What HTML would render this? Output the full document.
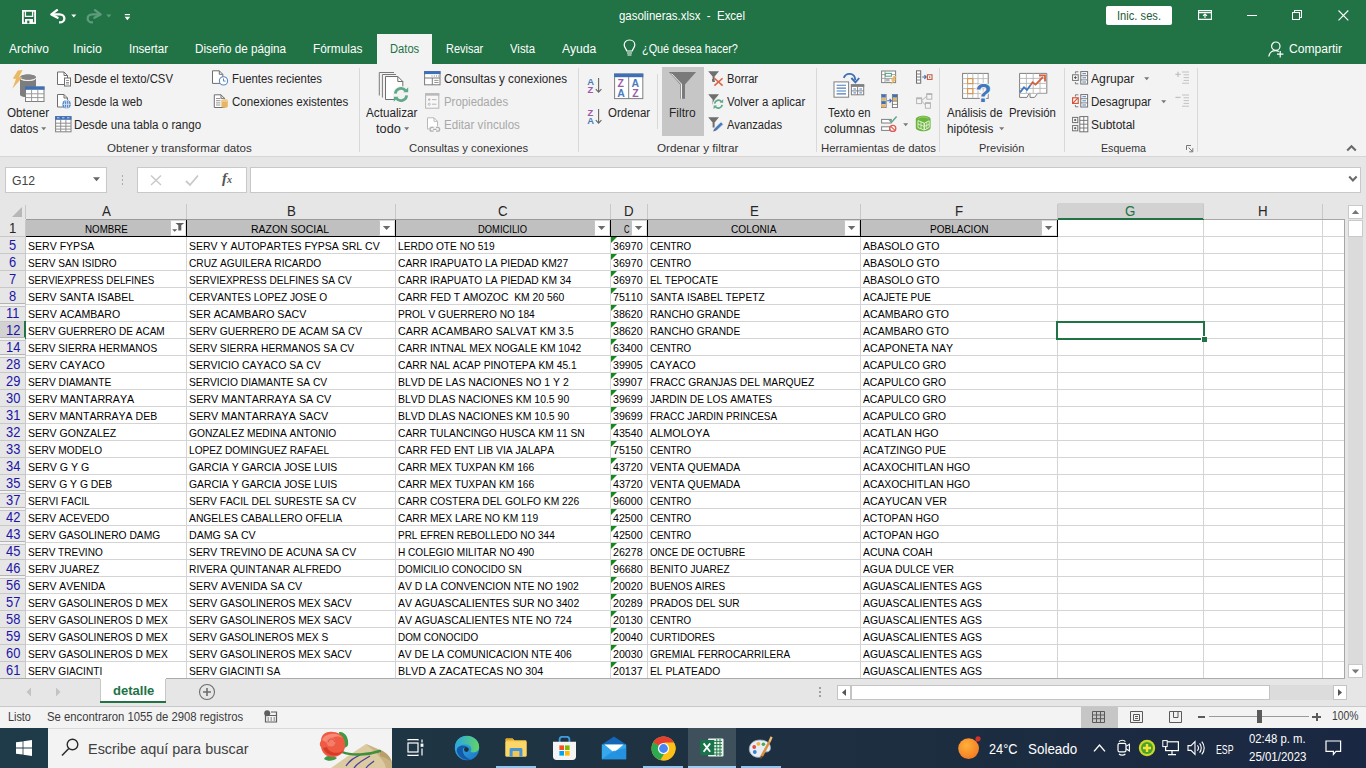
<!DOCTYPE html>
<html><head><meta charset="utf-8"><title>gasolineras.xlsx - Excel</title>
<style>
html,body{margin:0;padding:0;}
body{width:1366px;height:768px;overflow:hidden;position:relative;background:#e6e6e6;font-family:"Liberation Sans",sans-serif;}
.r{position:absolute;display:block;}
.t{position:absolute;white-space:pre;line-height:1;transform-origin:0 0;font-family:"Liberation Sans",sans-serif;}
</style></head><body>
<div class="r" style="left:0px;top:0px;width:1366px;height:64px;background:#217346;"></div>
<div class="r" style="left:377px;top:34px;width:55px;height:30px;background:#f3f3f3;"></div>
<span class="t" style="left:619.00px;top:10.00px;font-size:12px;color:#ffffff;transform:scaleX(0.9542);">gasolineras.xlsx  -  Excel</span>
<span class="t" style="left:9.00px;top:43.00px;font-size:12.5px;color:#ffffff;transform:scaleX(0.9596);">Archivo</span>
<span class="t" style="left:73.00px;top:43.00px;font-size:12.5px;color:#ffffff;transform:scaleX(0.9938);">Inicio</span>
<span class="t" style="left:129.00px;top:43.00px;font-size:12.5px;color:#ffffff;transform:scaleX(0.9203);">Insertar</span>
<span class="t" style="left:195.00px;top:43.00px;font-size:12.5px;color:#ffffff;transform:scaleX(0.9353);">Diseño de página</span>
<span class="t" style="left:313.00px;top:43.00px;font-size:12.5px;color:#ffffff;transform:scaleX(0.9483);">Fórmulas</span>
<span class="t" style="left:445.80px;top:43.00px;font-size:12.5px;color:#ffffff;transform:scaleX(0.8779);">Revisar</span>
<span class="t" style="left:510.00px;top:43.00px;font-size:12.5px;color:#ffffff;transform:scaleX(0.9070);">Vista</span>
<span class="t" style="left:561.80px;top:43.00px;font-size:12.5px;color:#ffffff;transform:scaleX(0.9711);">Ayuda</span>
<span class="t" style="left:641.60px;top:43.00px;font-size:12.5px;color:#ffffff;transform:scaleX(0.8680);">¿Qué desea hacer?</span>
<span class="t" style="left:1289.00px;top:43.00px;font-size:12.5px;color:#ffffff;transform:scaleX(0.9659);">Compartir</span>
<span class="t" style="left:389.80px;top:43.00px;font-size:12.5px;color:#217346;transform:scaleX(0.8942);">Datos</span>
<div class="r" style="left:1106px;top:6px;width:66px;height:19px;background:#ffffff;border-radius:2px;"></div>
<span class="t" style="left:1117.00px;top:10.00px;font-size:12px;color:#1e5c3a;transform:scaleX(0.9293);">Inic. ses.</span>
<div class="r" style="left:0px;top:64px;width:1366px;height:92px;background:#f3f3f3;"></div>
<div class="r" style="left:0px;top:156px;width:1366px;height:1px;background:#d6d6d6;"></div>
<div class="r" style="left:359px;top:68px;width:1px;height:84px;background:#d9d9d9;"></div>
<div class="r" style="left:578px;top:68px;width:1px;height:84px;background:#d9d9d9;"></div>
<div class="r" style="left:816px;top:68px;width:1px;height:84px;background:#d9d9d9;"></div>
<div class="r" style="left:939px;top:68px;width:1px;height:84px;background:#d9d9d9;"></div>
<div class="r" style="left:1064px;top:68px;width:1px;height:84px;background:#d9d9d9;"></div>
<div class="r" style="left:1197px;top:68px;width:1px;height:84px;background:#d9d9d9;"></div>
<div class="r" style="left:657px;top:74px;width:1px;height:55px;background:#d9d9d9;"></div>
<div class="r" style="left:662px;top:67px;width:42px;height:69px;background:#c6c6c6;"></div>
<span class="t" style="left:74.40px;top:73.00px;font-size:12.5px;color:#262626;transform:scaleX(0.9076);">Desde el texto/CSV</span>
<span class="t" style="left:74.40px;top:96.00px;font-size:12.5px;color:#262626;transform:scaleX(0.9031);">Desde la web</span>
<span class="t" style="left:74.40px;top:119.00px;font-size:12.5px;color:#262626;transform:scaleX(0.9283);">Desde una tabla o rango</span>
<span class="t" style="left:6.70px;top:107.00px;font-size:12.5px;color:#262626;transform:scaleX(0.9321);">Obtener</span>
<span class="t" style="left:9.60px;top:123.00px;font-size:12.5px;color:#262626;transform:scaleX(0.9255);">datos</span>
<span class="t" style="left:231.50px;top:73.00px;font-size:12.5px;color:#262626;transform:scaleX(0.9058);">Fuentes recientes</span>
<span class="t" style="left:231.50px;top:96.00px;font-size:12.5px;color:#262626;transform:scaleX(0.9247);">Conexiones existentes</span>
<span class="t" style="left:366.30px;top:107.00px;font-size:12.5px;color:#262626;transform:scaleX(0.9365);">Actualizar</span>
<span class="t" style="left:375.90px;top:123.00px;font-size:12.5px;color:#262626;transform:scaleX(1.0194);">todo</span>
<span class="t" style="left:443.70px;top:73.00px;font-size:12.5px;color:#262626;transform:scaleX(0.9317);">Consultas y conexiones</span>
<span class="t" style="left:607.80px;top:107.00px;font-size:12.5px;color:#262626;transform:scaleX(0.9181);">Ordenar</span>
<span class="t" style="left:669.20px;top:107.00px;font-size:12.5px;color:#262626;transform:scaleX(0.9576);">Filtro</span>
<span class="t" style="left:726.50px;top:73.00px;font-size:12.5px;color:#262626;transform:scaleX(0.8954);">Borrar</span>
<span class="t" style="left:726.50px;top:96.00px;font-size:12.5px;color:#262626;transform:scaleX(0.9150);">Volver a aplicar</span>
<span class="t" style="left:726.50px;top:119.00px;font-size:12.5px;color:#262626;transform:scaleX(0.8925);">Avanzadas</span>
<span class="t" style="left:827.80px;top:107.00px;font-size:12.5px;color:#262626;transform:scaleX(0.9015);">Texto en</span>
<span class="t" style="left:823.60px;top:123.00px;font-size:12.5px;color:#262626;transform:scaleX(0.9589);">columnas</span>
<span class="t" style="left:947.30px;top:107.00px;font-size:12.5px;color:#262626;transform:scaleX(0.9198);">Análisis de</span>
<span class="t" style="left:946.50px;top:123.00px;font-size:12.5px;color:#262626;transform:scaleX(0.9385);">hipótesis</span>
<span class="t" style="left:1009.30px;top:107.00px;font-size:12.5px;color:#262626;transform:scaleX(0.9122);">Previsión</span>
<span class="t" style="left:1090.80px;top:73.00px;font-size:12.5px;color:#262626;transform:scaleX(0.9736);">Agrupar</span>
<span class="t" style="left:1090.80px;top:96.00px;font-size:12.5px;color:#262626;transform:scaleX(0.9217);">Desagrupar</span>
<span class="t" style="left:1090.80px;top:119.00px;font-size:12.5px;color:#262626;transform:scaleX(0.9593);">Subtotal</span>
<span class="t" style="left:443.70px;top:96.00px;font-size:12.5px;color:#a8a8a8;transform:scaleX(0.9132);">Propiedades</span>
<span class="t" style="left:443.70px;top:119.00px;font-size:12.5px;color:#a8a8a8;transform:scaleX(0.9258);">Editar vínculos</span>
<span class="t" style="left:106.60px;top:143.00px;font-size:11.5px;color:#333333;transform:scaleX(1.0062);">Obtener y transformar datos</span>
<span class="t" style="left:409.30px;top:143.00px;font-size:11.5px;color:#333333;transform:scaleX(0.9806);">Consultas y conexiones</span>
<span class="t" style="left:656.60px;top:143.00px;font-size:11.5px;color:#333333;transform:scaleX(1.0177);">Ordenar y filtrar</span>
<span class="t" style="left:820.50px;top:143.00px;font-size:11.5px;color:#333333;transform:scaleX(0.9885);">Herramientas de datos</span>
<span class="t" style="left:979.30px;top:143.00px;font-size:11.5px;color:#333333;transform:scaleX(0.9599);">Previsión</span>
<span class="t" style="left:1100.50px;top:143.00px;font-size:11.5px;color:#333333;transform:scaleX(0.9242);">Esquema</span>
<div class="r" style="left:0px;top:157px;width:1366px;height:46px;background:#e6e6e6;"></div>
<div class="r" style="left:5px;top:167px;width:102px;height:26px;background:#ffffff;box-sizing:border-box;border:1px solid #c8c8c8;"></div>
<span class="t" style="left:12.30px;top:175.00px;font-size:12.5px;color:#444444;transform:scaleX(0.9777);">G12</span>
<svg class="r" style="left:92px;top:176px;" width="9" height="7" viewBox="0 0 9 7"><path d="M1 1.3 H8 L4.5 5.3 Z" fill="#666"/></svg>
<div class="r" style="left:121.5px;top:175px;width:1.5px;height:2px;background:#a9a9a9;"></div>
<div class="r" style="left:121.5px;top:179px;width:1.5px;height:2px;background:#a9a9a9;"></div>
<div class="r" style="left:121.5px;top:183px;width:1.5px;height:2px;background:#a9a9a9;"></div>
<div class="r" style="left:137px;top:167px;width:110px;height:26px;background:#ffffff;box-sizing:border-box;border:1px solid #c8c8c8;"></div>
<svg class="r" style="left:149px;top:173px;" width="14" height="14" viewBox="0 0 14 14"><path d="M2 2.5 L12 12 M12 2.5 L2 12" stroke="#c9c9c9" stroke-width="1.5" fill="none"/></svg>
<svg class="r" style="left:184px;top:173px;" width="16" height="14" viewBox="0 0 16 14"><path d="M2 8 L6 12 L14 2.5" stroke="#c9c9c9" stroke-width="1.8" fill="none"/></svg>
<span class="t" style="left:222px;top:171px;font-size:15px;font-family:'Liberation Serif',serif;font-style:italic;font-weight:bold;color:#555;">f<span style="font-size:10px;">x</span></span>
<div class="r" style="left:250px;top:167px;width:1111px;height:26px;background:#ffffff;box-sizing:border-box;border:1px solid #c8c8c8;"></div>
<svg class="r" style="left:1348px;top:175px;" width="10" height="8" viewBox="0 0 10 8"><path d="M1.2 1.6 L4.9 5.4 L8.6 1.6" stroke="#6a6a6a" stroke-width="2.1" fill="none"/></svg>
<svg class="r" style="left:22px;top:10px;" width="14" height="14" viewBox="0 0 14 14"><path d="M0.9 0.9 H13.1 V13.1 H0.9 Z" fill="none" stroke="#fff" stroke-width="1.8"/><path d="M3.4 1 V6.3 H10.6 V1" fill="none" stroke="#fff" stroke-width="1.3"/><path d="M3 9 H11 V13 H3 Z" fill="#fff"/><path d="M5.2 10.6 H7.4 V13.4 H5.2 Z" fill="#217346"/></svg>
<svg class="r" style="left:50px;top:9px;" width="17" height="15" viewBox="0 0 17 15"><path d="M1.4 5.4 L7 1.2 M1.4 5.4 L7.6 8.8" stroke="#fff" stroke-width="2.3" fill="none" stroke-linecap="round"/><path d="M2.2 5.4 H9.5 C16 5.4 16 13.4 9.5 13.4 H9" stroke="#fff" stroke-width="2.3" fill="none"/></svg>
<svg class="r" style="left:71px;top:14px;" width="6" height="4" viewBox="0 0 6 4"><path d="M0.3 0.5 H5.3 L2.8 3.6 Z" fill="#fff"/></svg>
<svg class="r" style="left:85px;top:9px;" width="17" height="15" viewBox="0 0 17 15"><path d="M15.6 5.4 L10 1.2 M15.6 5.4 L9.4 8.8" stroke="#5e9c7c" stroke-width="2.3" fill="none" stroke-linecap="round"/><path d="M14.8 5.4 H7.5 C1 5.4 1 13.4 7.5 13.4 H8" stroke="#5e9c7c" stroke-width="2.3" fill="none"/></svg>
<svg class="r" style="left:106px;top:14px;" width="6" height="4" viewBox="0 0 6 4"><path d="M0.3 0.5 H5.3 L2.8 3.6 Z" fill="#5e9c7c"/></svg>
<svg class="r" style="left:124px;top:13px;" width="7" height="8" viewBox="0 0 7 8"><path d="M0.8 1 H6 V2.2 H0.8 Z" fill="#fff"/><path d="M0.6 3.8 H6.2 L3.4 7.2 Z" fill="#fff"/></svg>
<svg class="r" style="left:1198px;top:10px;" width="14" height="10" viewBox="0 0 14 10"><path d="M0.6 0.6 H13.4 V9.4 H0.6 Z M0.6 2.6 H13.4" fill="none" stroke="#fff" stroke-width="1.1"/><path d="M7 8 V4.2 M5 5.8 L7 3.9 L9 5.8" fill="none" stroke="#fff" stroke-width="1.1"/></svg>
<div class="r" style="left:1246.5px;top:14.7px;width:10px;height:1.1px;background:#ffffff;"></div>
<svg class="r" style="left:1292px;top:10px;" width="10" height="10" viewBox="0 0 10 10"><path d="M0.5 2.5 H7.5 V9.5 H0.5 Z" fill="none" stroke="#fff" stroke-width="1.05"/><path d="M2.5 2.5 V0.5 H9.5 V7.5 H7.5" fill="none" stroke="#fff" stroke-width="1.05"/></svg>
<svg class="r" style="left:1338px;top:10px;" width="11" height="11" viewBox="0 0 11 11"><path d="M0.5 0.5 L10.3 10.3 M10.3 0.5 L0.5 10.3" stroke="#fff" stroke-width="1.1" fill="none"/></svg>
<svg class="r" style="left:623px;top:39px;" width="13" height="18" viewBox="0 0 13 18"><path d="M6.5 1 C2.8 1 1.2 3.8 1.2 6 C1.2 8.4 3.2 9.6 3.8 12 H9.2 C9.8 9.6 11.8 8.4 11.8 6 C11.8 3.8 10.2 1 6.5 1 Z" fill="none" stroke="#fff" stroke-width="1.2"/><path d="M4 14 H9 M4.5 16 H8.5" stroke="#fff" stroke-width="1.2"/></svg>
<svg class="r" style="left:1268px;top:41px;" width="17" height="17" viewBox="0 0 17 17"><circle cx="7.8" cy="5.2" r="4.2" fill="none" stroke="#fff" stroke-width="1.2"/><path d="M0.8 15.5 C1.6 10.8 4.2 9.6 7.4 9.6 C9 9.6 10 9.9 10.8 10.4" fill="none" stroke="#fff" stroke-width="1.2"/><path d="M12.2 10 V16.4 M9 13.2 H15.4" stroke="#fff" stroke-width="1.2"/></svg>
<svg class="r" style="left:1346px;top:144px;" width="11" height="8" viewBox="0 0 11 8"><path d="M1.2 6.6 L5.5 2.3 L9.8 6.6" fill="none" stroke="#6a6a6a" stroke-width="2.1"/></svg>
<svg class="r" style="left:12px;top:70px;" width="33" height="33" viewBox="0 0 33 33"><path d="M8 7.4 V24.5 C8 28.2 24 28.2 24 24.5 V7.4 Z" fill="#7d7d7d"/><ellipse cx="16" cy="7.4" rx="8" ry="2.9" fill="#8a8a8a" stroke="#f3f3f3" stroke-width="0.9"/><path d="M8 7.4 C8 3.4 24 3.4 24 7.4" fill="#7d7d7d"/><ellipse cx="16" cy="7.2" rx="7.6" ry="2.6" fill="#858585"/><path d="M8 8.2 C9 11.4 23 11.4 24 8.2" fill="none" stroke="#f3f3f3" stroke-width="1"/><path d="M5.8 0.6 L10.6 0 L7.1 6.8 L10.3 7.6 L0.3 18.8 L4 9 L0.8 8.6 Z" fill="#ebb866"/><rect x="13.5" y="17" width="18.5" height="14.5" fill="#fff" stroke="#7f7f7f" stroke-width="1"/><rect x="13" y="16.5" width="19.5" height="3.3" fill="#3f6fb5"/><path d="M19.6 20 V31.5 M25.8 20 V31.5 M13.5 23.8 H32 M13.5 27.6 H32" stroke="#9a9a9a" stroke-width="1"/></svg>
<svg class="r" style="left:41px;top:127px;" width="6" height="4" viewBox="0 0 6 4"><path d="M0.2 0.3 H5.2 L2.7 3.3 Z" fill="#777"/></svg>
<svg class="r" style="left:56px;top:71px;" width="16" height="16" viewBox="0 0 16 16"><path d="M1.5 1 H8.0 L11.5 4.5 V13.5 H1.5 Z" fill="#fff" stroke="#6e6e6e" stroke-width="1"/><path d="M8.0 1 V4.5 H11.5" fill="none" stroke="#6e6e6e" stroke-width="1"/><rect x="8.5" y="7" width="6" height="8" fill="#fff" stroke="#6e6e6e" stroke-width="1"/><path d="M10 9.5 H13 M10 11.5 H13 M10 13 H13" stroke="#8a8a8a" stroke-width="0.9"/></svg>
<svg class="r" style="left:56px;top:94px;" width="16" height="16" viewBox="0 0 16 16"><path d="M1.5 0.5 H8.0 L11.5 4.0 V13 H1.5 Z" fill="#fff" stroke="#6e6e6e" stroke-width="1"/><path d="M8.0 0.5 V4.0 H11.5" fill="none" stroke="#6e6e6e" stroke-width="1"/><circle cx="10.6" cy="10.3" r="4.3" fill="#4f81c5"/><path d="M6.3 10.3 H14.9 M10.6 6 V14.6" stroke="#dbe6f5" stroke-width="0.9"/><ellipse cx="10.6" cy="10.3" rx="2.1" ry="4.3" fill="none" stroke="#dbe6f5" stroke-width="0.9"/></svg>
<svg class="r" style="left:55px;top:116px;" width="17" height="17" viewBox="0 0 17 17"><rect x="0.6" y="0.6" width="15.4" height="15.2" fill="#fff" stroke="#7f7f7f" stroke-width="1"/><rect x="0.2" y="0.2" width="16.2" height="3.6" fill="#3f6fb5"/><path d="M2 1.8 H4.5 M7 1.8 H9.5 M12 1.8 H14.5" stroke="#cfe0f5" stroke-width="0.9"/><path d="M5.7 4 V16 M10.9 4 V16 M0.6 7.2 H16 M0.6 10.2 H16 M0.6 13.1 H16" stroke="#8f8f8f" stroke-width="1"/></svg>
<svg class="r" style="left:211px;top:70px;" width="18" height="16" viewBox="0 0 18 16"><path d="M1.5 0.8 H8.3 L11.8 4.3 V13.4 H1.5 Z" fill="#fff" stroke="#6e6e6e" stroke-width="1"/><path d="M8.3 0.8 V4.3 H11.8" fill="none" stroke="#6e6e6e" stroke-width="1"/><circle cx="12.5" cy="10.9" r="4.1" fill="#fff" stroke="#5b86c2" stroke-width="1.1"/><path d="M12.5 8.5 V11.1 H14.6" fill="none" stroke="#5b86c2" stroke-width="1"/></svg>
<svg class="r" style="left:213px;top:94px;" width="16" height="15" viewBox="0 0 16 15"><path d="M1.3 0.8 H8.0 L11.5 4.3 V13.5 H1.3 Z" fill="#fff" stroke="#6e6e6e" stroke-width="1"/><path d="M8.0 0.8 V4.3 H11.5" fill="none" stroke="#6e6e6e" stroke-width="1"/><path d="M3 4.5 H7.5 M3 6.7 H7.5 M3 8.9 H7.5 M3 11 H7.5" stroke="#8a8a8a" stroke-width="0.9"/><path d="M8.4 6.4 V12.2 C8.4 14.2 14.8 14.2 14.8 12.2 V6.4 Z" fill="#e6b665"/><ellipse cx="11.6" cy="6.4" rx="3.2" ry="1.5" fill="#efc987"/></svg>
<svg class="r" style="left:378px;top:71px;" width="34" height="32" viewBox="0 0 34 32"><path d="M1.3 24.5 V1.5 H16" fill="none" stroke="#7a7a7a" stroke-width="1"/><path d="M4.4 26.6 V3.5 H18" fill="none" stroke="#7a7a7a" stroke-width="1"/><path d="M7.5 5.5 H19.8 L24.8 10.5 V28.5 H7.5 Z" fill="#fff" stroke="#6e6e6e" stroke-width="1"/><path d="M19.8 5.5 V10.5 H24.8" fill="none" stroke="#6e6e6e" stroke-width="1"/><circle cx="23" cy="23.5" r="8.4" fill="#f3f3f3"/><path d="M17.3 22.6 A5.8 5.8 0 0 1 27.6 19.6" fill="none" stroke="#5fa88a" stroke-width="2.7"/><path d="M25.4 21.2 H30.2 V16.2 Z" fill="#5fa88a"/><path d="M28.7 24.4 A5.8 5.8 0 0 1 18.4 27.4" fill="none" stroke="#5fa88a" stroke-width="2.7"/><path d="M20.6 25.8 H15.8 V30.8 Z" fill="#5fa88a"/></svg>
<svg class="r" style="left:403.6px;top:127px;" width="6" height="4" viewBox="0 0 6 4"><path d="M0.2 0.3 H5.2 L2.7 3.3 Z" fill="#777"/></svg>
<svg class="r" style="left:424px;top:71px;" width="17" height="15" viewBox="0 0 17 15"><rect x="0.6" y="0.6" width="15.4" height="13.2" fill="#fff" stroke="#7a7a7a" stroke-width="1"/><rect x="0.1" y="0.1" width="16.4" height="3" fill="#3f6fb5"/><path d="M0.6 7 H16 M8.3 7 V13.8" stroke="#7a7a7a" stroke-width="1"/><path d="M7.5 5 H8.5 M9.8 5 H10.8 M12 5 H13 M14.2 5 H15.2" stroke="#7a7a7a" stroke-width="1"/><path d="M10.3 9.4 H14.5 M10.3 11.5 H14.5" stroke="#8a8a8a" stroke-width="0.9"/></svg>
<svg class="r" style="left:425px;top:93px;" width="15" height="16" viewBox="0 0 15 16"><rect x="0.6" y="0.8" width="13.2" height="14.4" fill="#f7f7f7" stroke="#b5b5b5" stroke-width="1"/><rect x="0.1" y="0.3" width="14.2" height="2.4" fill="#b9b9b9"/><circle cx="4.2" cy="6.6" r="1.2" fill="#b5b5b5"/><circle cx="4.2" cy="11.2" r="1.1" fill="none" stroke="#b5b5b5" stroke-width="0.9"/><path d="M7 6.6 H11.5 M7 11.2 H11.5" stroke="#b5b5b5" stroke-width="1"/></svg>
<svg class="r" style="left:426px;top:117px;" width="16" height="16" viewBox="0 0 16 16"><path d="M1.5 0.8 H8.0 L11.5 4.3 V12 H1.5 Z" fill="#fff" stroke="#b9b9b9" stroke-width="1"/><path d="M8.0 0.8 V4.3 H11.5" fill="none" stroke="#b9b9b9" stroke-width="1"/><rect x="3" y="9.2" width="12" height="6.5" fill="#f3f3f3"/><path d="M7.6 10.4 H5.8 A1.9 1.9 0 0 0 5.8 14.2 H7.6 M10 10.4 H11.8 A1.9 1.9 0 0 1 11.8 14.2 H10 M7 12.3 H10.6" fill="none" stroke="#b0b0b0" stroke-width="1.3"/></svg>
<svg class="r" style="left:587px;top:77px;" width="16" height="17" viewBox="0 0 16 17"><text x="0.2" y="7.6" font-family="Liberation Sans" font-size="9.4" font-weight="bold" fill="#4a7dbd">A</text><text x="0.6" y="15.9" font-family="Liberation Sans" font-size="9.4" font-weight="bold" fill="#9b59a8">Z</text><path d="M11.6 1 V15 M8.8 12.2 L11.6 15.2 L14.4 12.2" fill="none" stroke="#666" stroke-width="1.1"/></svg>
<svg class="r" style="left:587px;top:108px;" width="16" height="17" viewBox="0 0 16 17"><text x="0.6" y="7.6" font-family="Liberation Sans" font-size="9.4" font-weight="bold" fill="#9b59a8">Z</text><text x="0.2" y="15.9" font-family="Liberation Sans" font-size="9.4" font-weight="bold" fill="#4a7dbd">A</text><path d="M11.6 1 V15 M8.8 12.2 L11.6 15.2 L14.4 12.2" fill="none" stroke="#666" stroke-width="1.1"/></svg>
<svg class="r" style="left:614px;top:73px;" width="30" height="27" viewBox="0 0 30 27"><rect x="0.6" y="1" width="28.2" height="24.6" fill="#fff" stroke="#7f7f7f" stroke-width="1"/><rect x="0.1" y="0.6" width="29.2" height="3.6" fill="#3f6fb5"/><path d="M14.7 4 V25.6" stroke="#7f7f7f" stroke-width="1"/><text x="3.6" y="14.4" font-family="Liberation Sans" font-size="10.5" font-weight="bold" fill="#9b59a8">Z</text><text x="3.3" y="24.2" font-family="Liberation Sans" font-size="10.5" font-weight="bold" fill="#4a7dbd">A</text><text x="17.6" y="14.4" font-family="Liberation Sans" font-size="10.5" font-weight="bold" fill="#4a7dbd">A</text><text x="18.2" y="24.2" font-family="Liberation Sans" font-size="10.5" font-weight="bold" fill="#9b59a8">Z</text></svg>
<svg class="r" style="left:668px;top:71px;" width="30" height="29" viewBox="0 0 30 29"><path d="M0.9 1.1 H28.1 L17 13.4 V27.8 H12.2 V13.4 Z" fill="#7a7a7a"/><path d="M3.4 2.6 L13.4 13 V27.8" fill="none" stroke="#fff" stroke-width="1"/></svg>
<svg class="r" style="left:708px;top:71px;" width="16" height="16" viewBox="0 0 16 16"><path d="M0.2 0.2 H11 L6.6 5.4 V10.4 H4.6 V5.4 Z" fill="#6f6f6f"/><path d="M4.6 8 V10.4 H7" fill="none" stroke="#6f6f6f" stroke-width="1"/><path d="M6.4 7.2 L14.6 14.6 M14.6 7.2 L6.4 14.6" stroke="#dc6141" stroke-width="1.5"/></svg>
<svg class="r" style="left:708px;top:94px;" width="17" height="17" viewBox="0 0 17 17"><path d="M0.2 0.2 H11 L6.6 5.4 V10.4 H4.6 V5.4 Z" fill="#6f6f6f"/><circle cx="10.4" cy="10.2" r="5.6" fill="#f3f3f3"/><path d="M6.6 9.6 A3.9 3.9 0 0 1 13.4 7.6" fill="none" stroke="#5fa88a" stroke-width="1.7"/><path d="M11.8 8.8 H15.2 V5.2 Z" fill="#5fa88a"/><path d="M14.2 10.8 A3.9 3.9 0 0 1 7.4 12.8" fill="none" stroke="#5fa88a" stroke-width="1.7"/><path d="M9 11.6 H5.6 V15.2 Z" fill="#5fa88a"/></svg>
<svg class="r" style="left:708px;top:117px;" width="17" height="16" viewBox="0 0 17 16"><path d="M0.2 0.2 H11 L6.6 5.4 V10.4 H4.6 V5.4 Z" fill="#6f6f6f"/><path d="M5.2 14.6 L6.4 11.2 L13 4.8 L15.4 7.2 L8.8 13.6 Z" fill="#4a7dbd" stroke="#f3f3f3" stroke-width="0.8"/><path d="M5.2 14.6 L6.2 11.8 L8.2 13.6 Z" fill="#6f6f6f"/></svg>
<svg class="r" style="left:833px;top:72px;" width="32" height="26" viewBox="0 0 32 26"><rect x="1" y="9.9" width="14.6" height="15.3" fill="#fff" stroke="#7f7f7f" stroke-width="1"/><path d="M3.6 13.2 H13 M3.6 16.1 H13 M3.6 19 H13 M3.6 21.9 H13" stroke="#4a7dbd" stroke-width="1.1"/><rect x="18.4" y="12.8" width="12.3" height="10" fill="#fff" stroke="#7f7f7f" stroke-width="1"/><rect x="17.9" y="12.3" width="13.3" height="2.6" fill="#7f7f7f"/><path d="M24.6 15 V22.8 M18.4 18.9 H30.7" stroke="#7f7f7f" stroke-width="1"/><path d="M20.4 17 H23 M26.4 17 H29 M20.4 20.9 H23 M26.4 20.9 H29" stroke="#4a7dbd" stroke-width="1"/><path d="M10.8 5.8 C13 0.2 22 0.2 22.3 8.2" fill="none" stroke="#3f6fb5" stroke-width="1.9"/><path d="M18.4 6 L22.4 10.4 L26.2 6" fill="none" stroke="#3f6fb5" stroke-width="1.9"/></svg>
<svg class="r" style="left:881px;top:70px;" width="17" height="16" viewBox="0 0 17 16"><rect x="0.6" y="1" width="14" height="11.6" fill="#fff" stroke="#7f7f7f" stroke-width="1"/><path d="M0.6 4.6 H14.6 M0.6 8.4 H14.6 M4 1 V12.6" stroke="#9a9a9a" stroke-width="0.9"/><rect x="4.4" y="3.4" width="6" height="2.8" fill="#fff" stroke="#5fa88a" stroke-width="1.1"/><rect x="4.6" y="8.8" width="4" height="2.6" fill="#b5b5b5"/><path d="M12.6 6 L15.6 6 L13.4 9.4 L15.2 9.6 L9.6 15 L11.4 10.6 L9.8 10.4 Z" fill="#ebb866"/></svg>
<svg class="r" style="left:881px;top:94px;" width="17" height="14" viewBox="0 0 17 14"><rect x="0.1" y="0.2" width="5" height="13.4" fill="#fff" stroke="#6f6f6f" stroke-width="0.9"/><rect x="0.5" y="0.5" width="4.2" height="3.1" fill="#3f6fb5"/><rect x="0.5" y="3.9" width="4.2" height="3" fill="#e6b665"/><rect x="0.5" y="7.1" width="4.2" height="3" fill="#3f6fb5"/><rect x="0.5" y="10.3" width="4.2" height="3" fill="#e6b665"/><rect x="11.4" y="0.2" width="5" height="13.4" fill="#fff" stroke="#6f6f6f" stroke-width="0.9"/><rect x="11.8" y="0.5" width="4.2" height="3.1" fill="#3f6fb5"/><rect x="11.8" y="3.9" width="4.2" height="3" fill="#e6b665"/><path d="M6.2 6.8 H10.2 M8.6 5 L10.4 6.8 L8.6 8.6" fill="none" stroke="#3f6fb5" stroke-width="1.1"/><path d="M11.4 7.2 H16.4 M11.4 10.4 H16.4" stroke="#6f6f6f" stroke-width="0.8"/></svg>
<svg class="r" style="left:881px;top:116px;" width="17" height="17" viewBox="0 0 17 17"><rect x="0.6" y="3.4" width="9.6" height="3.6" fill="#fff" stroke="#7f7f7f" stroke-width="1"/><rect x="0.6" y="10.8" width="8" height="3.6" fill="#fff" stroke="#7f7f7f" stroke-width="1"/><path d="M8.2 3.8 L10.6 6.2 L15.6 0.6" fill="none" stroke="#5fa88a" stroke-width="1.5"/><circle cx="11.8" cy="12.4" r="3" fill="#fff" stroke="#dc5a4e" stroke-width="1.3"/><path d="M9.8 10.4 L13.8 14.4" stroke="#dc5a4e" stroke-width="1.2"/></svg>
<svg class="r" style="left:903px;top:123px;" width="6" height="4" viewBox="0 0 6 4"><path d="M0.2 0.2 H5.2 L2.7 3.2 Z" fill="#777"/></svg>
<svg class="r" style="left:916px;top:70px;" width="17" height="14" viewBox="0 0 17 14"><rect x="0.5" y="0.8" width="4.2" height="12.4" fill="#fff" stroke="#6f6f6f" stroke-width="1"/><path d="M0.5 4 H4.7 M0.5 7 H4.7 M0.5 10 H4.7" stroke="#6f6f6f" stroke-width="0.9"/><path d="M6.2 7 H10 M8.4 5.2 L10.2 7 L8.4 8.8" fill="none" stroke="#3f6fb5" stroke-width="1.1"/><rect x="11.4" y="4.8" width="4.6" height="4.6" fill="#fff" stroke="#c65a3c" stroke-width="1.1"/><rect x="13" y="6.4" width="1.4" height="1.4" fill="#c65a3c"/></svg>
<svg class="r" style="left:916px;top:93px;" width="17" height="16" viewBox="0 0 17 16"><path d="M5.6 7.6 L11 3 M5.6 8 L9.4 12" stroke="#b5b5b5" stroke-width="1"/><rect x="0.6" y="5" width="5" height="5.6" fill="#f5f5f5" stroke="#b5b5b5" stroke-width="1"/><rect x="0.2" y="4.6" width="5.8" height="1.6" fill="#b5b5b5"/><rect x="10.8" y="0.8" width="5" height="5.4" fill="#f5f5f5" stroke="#b5b5b5" stroke-width="1"/><rect x="10.4" y="0.4" width="5.8" height="1.6" fill="#b5b5b5"/><rect x="9.4" y="9.8" width="5" height="5.4" fill="#f5f5f5" stroke="#b5b5b5" stroke-width="1"/><rect x="9" y="9.4" width="5.8" height="1.6" fill="#b5b5b5"/></svg>
<svg class="r" style="left:915px;top:115px;" width="17" height="17" viewBox="0 0 17 17"><path d="M0.8 4.4 C0.8 -0.6 15.6 -0.6 15.6 4.4 V12.6 C15.6 17.6 0.8 17.6 0.8 12.6 Z" fill="#6bb53f"/><path d="M3 5.6 L9 8 V15 L3 12.6 Z M9.6 8 L14.2 5.8 V12.4 L9.6 15 Z" fill="none" stroke="#e8f5dc" stroke-width="0.9"/><path d="M3 9 L9 11.4 M6 6.8 V13.8 M11.8 7 V13.8 M9.6 11.4 L14.2 9.2" stroke="#e8f5dc" stroke-width="0.8"/><path d="M3.4 3.6 C5 1.4 11.6 1.4 13.4 3.8" fill="none" stroke="#9fd47a" stroke-width="1"/></svg>
<svg class="r" style="left:962px;top:72px;" width="30" height="31" viewBox="0 0 30 31"><rect x="0.6" y="1.4" width="25.6" height="25" fill="#fff" stroke="#7f7f7f" stroke-width="1"/><path d="M5.6 1.4 V26.4 M10.8 1.4 V26.4 M16 1.4 V26.4 M21.2 1.4 V26.4 M0.6 6.6 H26.2 M0.6 11.6 H26.2 M0.6 16.6 H26.2 M0.6 21.6 H26.2" stroke="#b9b9b9" stroke-width="0.9"/><rect x="5.6" y="6.6" width="5.2" height="5" fill="#fff" stroke="#e0954a" stroke-width="1.2"/><rect x="5.6" y="16.6" width="5.2" height="5" fill="#fff" stroke="#e0954a" stroke-width="1.2"/><path d="M14 10 H30 V30 H18 V22 H14 Z" fill="#f3f3f3" opacity="0.0"/><text x="13.6" y="29.6" font-family="Liberation Sans" font-size="26" font-weight="bold" fill="#f3f3f3" stroke="#f3f3f3" stroke-width="2.4">?</text><text x="13.6" y="29.6" font-family="Liberation Sans" font-size="26" font-weight="bold" fill="#3f78bd">?</text></svg>
<svg class="r" style="left:999px;top:127px;" width="6" height="4" viewBox="0 0 6 4"><path d="M0.2 0.3 H5.2 L2.7 3.3 Z" fill="#777"/></svg>
<svg class="r" style="left:1019px;top:72px;" width="29" height="27" viewBox="0 0 29 27"><path d="M0.6 1.4 H27.8 V21.4 H18.6 L15.6 25.4 H11 V21.4 H10 L8 25.4 H0.6 Z" fill="#fff" stroke="#7f7f7f" stroke-width="1"/><path d="M7.4 1.4 V21.4 M14.2 1.4 V21.4 M21 1.4 V21.4 M0.6 6.4 H27.8 M0.6 11.4 H27.8 M0.6 16.4 H27.8 M0.6 21.4 H27.8" stroke="#b5b5b5" stroke-width="0.9"/><path d="M1 20.4 L5 15.4 L8 18 L11.6 13" fill="none" stroke="#3f78bd" stroke-width="1.8"/><path d="M11.6 13 L13.6 10.2 L16.6 12.6 L24 5" fill="none" stroke="#d4613e" stroke-width="1.8"/><path d="M20 3.4 H26 V9.4" fill="none" stroke="#d4613e" stroke-width="1.8"/></svg>
<svg class="r" style="left:1072px;top:71px;" width="17" height="14" viewBox="0 0 17 14"><rect x="8.8" y="0.6" width="6.8" height="12.4" fill="#fff" stroke="#6f6f6f" stroke-width="1"/><path d="M8.8 4.7 H15.6 M8.8 8.9 H15.6" stroke="#6f6f6f" stroke-width="0.9"/><path d="M10.4 2.7 H14 M10.4 6.8 H14 M10.4 11 H14" stroke="#4a7dbd" stroke-width="1"/><path d="M6.4 0.8 H3.4 V2.6 M6.4 12.8 H3.4 V11" fill="none" stroke="#6f6f6f" stroke-width="0.9"/><rect x="0.6" y="3.8" width="5.6" height="5.6" fill="#fff" stroke="#6f6f6f" stroke-width="1"/><path d="M2 6.6 H4.8 M3.4 5.2 V8" stroke="#444" stroke-width="0.9"/></svg>
<svg class="r" style="left:1072px;top:94px;" width="17" height="14" viewBox="0 0 17 14"><rect x="8.8" y="0.6" width="6.8" height="12.4" fill="#fff" stroke="#6f6f6f" stroke-width="1"/><path d="M8.8 4.7 H15.6 M8.8 8.9 H15.6" stroke="#6f6f6f" stroke-width="0.9"/><path d="M10.4 2.7 H14 M10.4 6.8 H14 M10.4 11 H14" stroke="#4a7dbd" stroke-width="1"/><path d="M6.4 0.8 H3.4 V2.6 M6.4 12.8 H3.4 V11" fill="none" stroke="#6f6f6f" stroke-width="0.9"/><rect x="0.6" y="3.8" width="5.6" height="5.6" fill="#fff" stroke="#d4553a" stroke-width="1.2"/><path d="M1 9 L5.8 4.2" stroke="#d4553a" stroke-width="1.1"/></svg>
<svg class="r" style="left:1072px;top:116px;" width="17" height="17" viewBox="0 0 17 17"><rect x="0.6" y="1.4" width="5.2" height="5.2" fill="#fff" stroke="#6f6f6f" stroke-width="1"/><path d="M2 4 H4.4 M3.2 2.8 V5.2" stroke="#444" stroke-width="0.9"/><rect x="0.6" y="9.6" width="5.2" height="5.2" fill="#fff" stroke="#6f6f6f" stroke-width="1"/><path d="M2 12.2 H4.4 M3.2 11 V13.4" stroke="#444" stroke-width="0.9"/><rect x="7.8" y="0.6" width="8" height="15.2" fill="#fff" stroke="#6f6f6f" stroke-width="1"/><path d="M11.8 0.6 V15.8 M7.8 4.4 H15.8 M7.8 8.2 H15.8 M7.8 12 H15.8" stroke="#6f6f6f" stroke-width="0.9"/></svg>
<svg class="r" style="left:1144px;top:77px;" width="6" height="4" viewBox="0 0 6 4"><path d="M0.2 0.2 H5.2 L2.7 3.2 Z" fill="#777"/></svg>
<svg class="r" style="left:1161px;top:100px;" width="6" height="4" viewBox="0 0 6 4"><path d="M0.2 0.2 H5.2 L2.7 3.2 Z" fill="#777"/></svg>
<svg class="r" style="left:1175px;top:71px;" width="15" height="13" viewBox="0 0 15 13"><path d="M7 1 H14 M8.6 3.8 H14 M8.6 6.6 H14 M8.6 9.4 H14 M7 12.2 H14" stroke="#c2c2c2" stroke-width="1"/><path d="M0.4 3.4 H5.6 M3 0.8 V6" stroke="#c2c2c2" stroke-width="1.3"/></svg>
<svg class="r" style="left:1175px;top:94px;" width="15" height="13" viewBox="0 0 15 13"><path d="M7 1 H14 M8.6 3.8 H14 M8.6 6.6 H14 M8.6 9.4 H14 M7 12.2 H14" stroke="#c2c2c2" stroke-width="1"/><path d="M0.4 3.4 H5.6" stroke="#c2c2c2" stroke-width="1.3"/></svg>
<svg class="r" style="left:1186px;top:145px;" width="8" height="8" viewBox="0 0 8 8"><path d="M0.5 5 V0.5 H5" fill="none" stroke="#777" stroke-width="1"/><path d="M2.6 2.6 L6.6 6.6 M6.8 3.2 V6.8 H3.2" fill="none" stroke="#777" stroke-width="1"/></svg>
<div class="r" style="left:26px;top:220px;width:1319px;height:458px;background:#ffffff;"></div>
<div class="r" style="left:0px;top:203px;width:1345px;height:17px;background:#e6e6e6;"></div>
<div class="r" style="left:1058px;top:203px;width:146px;height:16px;background:#d2d2d2;"></div>
<div class="r" style="left:1057px;top:218px;width:147px;height:2px;background:#217346;"></div>
<div class="r" style="left:186px;top:204px;width:1px;height:15px;background:#c8c8c8;"></div>
<div class="r" style="left:395px;top:204px;width:1px;height:15px;background:#c8c8c8;"></div>
<div class="r" style="left:610px;top:204px;width:1px;height:15px;background:#c8c8c8;"></div>
<div class="r" style="left:647px;top:204px;width:1px;height:15px;background:#c8c8c8;"></div>
<div class="r" style="left:860px;top:204px;width:1px;height:15px;background:#c8c8c8;"></div>
<div class="r" style="left:1057px;top:204px;width:1px;height:15px;background:#c8c8c8;"></div>
<div class="r" style="left:1203px;top:204px;width:1px;height:15px;background:#c8c8c8;"></div>
<div class="r" style="left:1322px;top:204px;width:1px;height:15px;background:#c8c8c8;"></div>
<div class="r" style="left:25px;top:205px;width:1px;height:14px;background:#c8c8c8;"></div>
<svg class="r" style="left:11px;top:206px;" width="12" height="12" viewBox="0 0 12 12"><path d="M11 1 L11 11 L1 11 Z" fill="#b7b7b7"/></svg>
<span class="t" style="left:101.56px;top:204.00px;font-size:14px;color:#262626;transform:scaleX(0.95);">A</span>
<span class="t" style="left:286.56px;top:204.00px;font-size:14px;color:#262626;transform:scaleX(0.95);">B</span>
<span class="t" style="left:498.20px;top:204.00px;font-size:14px;color:#262626;transform:scaleX(0.95);">C</span>
<span class="t" style="left:624.20px;top:204.00px;font-size:14px;color:#262626;transform:scaleX(0.95);">D</span>
<span class="t" style="left:749.56px;top:204.00px;font-size:14px;color:#262626;transform:scaleX(0.95);">E</span>
<span class="t" style="left:954.94px;top:204.00px;font-size:14px;color:#262626;transform:scaleX(0.95);">F</span>
<span class="t" style="left:1125.33px;top:204.00px;font-size:14px;color:#217346;transform:scaleX(0.95);">G</span>
<span class="t" style="left:1258.20px;top:204.00px;font-size:14px;color:#262626;transform:scaleX(0.95);">H</span>
<div class="r" style="left:0px;top:220px;width:26px;height:458px;background:#e6e6e6;"></div>
<div class="r" style="left:25px;top:220px;width:1px;height:458px;background:#c8c8c8;"></div>
<div class="r" style="left:186px;top:220px;width:1px;height:458px;background:#d4d4d4;"></div>
<div class="r" style="left:395px;top:220px;width:1px;height:458px;background:#d4d4d4;"></div>
<div class="r" style="left:610px;top:220px;width:1px;height:458px;background:#d4d4d4;"></div>
<div class="r" style="left:647px;top:220px;width:1px;height:458px;background:#d4d4d4;"></div>
<div class="r" style="left:860px;top:220px;width:1px;height:458px;background:#d4d4d4;"></div>
<div class="r" style="left:1057px;top:220px;width:1px;height:458px;background:#d4d4d4;"></div>
<div class="r" style="left:1203px;top:220px;width:1px;height:458px;background:#d4d4d4;"></div>
<div class="r" style="left:1322px;top:220px;width:1px;height:458px;background:#d4d4d4;"></div>
<div class="r" style="left:1344px;top:220px;width:1px;height:458px;background:#d4d4d4;"></div>
<div class="r" style="left:26px;top:236px;width:1319px;height:1px;background:#d4d4d4;"></div>
<div class="r" style="left:0px;top:236px;width:25px;height:1px;background:#c8c8c8;"></div>
<div class="r" style="left:26px;top:253px;width:1319px;height:1px;background:#d4d4d4;"></div>
<div class="r" style="left:0px;top:253px;width:25px;height:1px;background:#c8c8c8;"></div>
<div class="r" style="left:26px;top:270px;width:1319px;height:1px;background:#d4d4d4;"></div>
<div class="r" style="left:0px;top:270px;width:25px;height:1px;background:#c8c8c8;"></div>
<div class="r" style="left:26px;top:287px;width:1319px;height:1px;background:#d4d4d4;"></div>
<div class="r" style="left:0px;top:287px;width:25px;height:1px;background:#c8c8c8;"></div>
<div class="r" style="left:26px;top:304px;width:1319px;height:1px;background:#d4d4d4;"></div>
<div class="r" style="left:0px;top:304px;width:25px;height:1px;background:#c8c8c8;"></div>
<div class="r" style="left:26px;top:321px;width:1319px;height:1px;background:#d4d4d4;"></div>
<div class="r" style="left:0px;top:321px;width:25px;height:1px;background:#c8c8c8;"></div>
<div class="r" style="left:26px;top:338px;width:1319px;height:1px;background:#d4d4d4;"></div>
<div class="r" style="left:0px;top:338px;width:25px;height:1px;background:#c8c8c8;"></div>
<div class="r" style="left:26px;top:355px;width:1319px;height:1px;background:#d4d4d4;"></div>
<div class="r" style="left:0px;top:355px;width:25px;height:1px;background:#c8c8c8;"></div>
<div class="r" style="left:26px;top:372px;width:1319px;height:1px;background:#d4d4d4;"></div>
<div class="r" style="left:0px;top:372px;width:25px;height:1px;background:#c8c8c8;"></div>
<div class="r" style="left:26px;top:389px;width:1319px;height:1px;background:#d4d4d4;"></div>
<div class="r" style="left:0px;top:389px;width:25px;height:1px;background:#c8c8c8;"></div>
<div class="r" style="left:26px;top:406px;width:1319px;height:1px;background:#d4d4d4;"></div>
<div class="r" style="left:0px;top:406px;width:25px;height:1px;background:#c8c8c8;"></div>
<div class="r" style="left:26px;top:423px;width:1319px;height:1px;background:#d4d4d4;"></div>
<div class="r" style="left:0px;top:423px;width:25px;height:1px;background:#c8c8c8;"></div>
<div class="r" style="left:26px;top:440px;width:1319px;height:1px;background:#d4d4d4;"></div>
<div class="r" style="left:0px;top:440px;width:25px;height:1px;background:#c8c8c8;"></div>
<div class="r" style="left:26px;top:457px;width:1319px;height:1px;background:#d4d4d4;"></div>
<div class="r" style="left:0px;top:457px;width:25px;height:1px;background:#c8c8c8;"></div>
<div class="r" style="left:26px;top:474px;width:1319px;height:1px;background:#d4d4d4;"></div>
<div class="r" style="left:0px;top:474px;width:25px;height:1px;background:#c8c8c8;"></div>
<div class="r" style="left:26px;top:491px;width:1319px;height:1px;background:#d4d4d4;"></div>
<div class="r" style="left:0px;top:491px;width:25px;height:1px;background:#c8c8c8;"></div>
<div class="r" style="left:26px;top:508px;width:1319px;height:1px;background:#d4d4d4;"></div>
<div class="r" style="left:0px;top:508px;width:25px;height:1px;background:#c8c8c8;"></div>
<div class="r" style="left:26px;top:525px;width:1319px;height:1px;background:#d4d4d4;"></div>
<div class="r" style="left:0px;top:525px;width:25px;height:1px;background:#c8c8c8;"></div>
<div class="r" style="left:26px;top:542px;width:1319px;height:1px;background:#d4d4d4;"></div>
<div class="r" style="left:0px;top:542px;width:25px;height:1px;background:#c8c8c8;"></div>
<div class="r" style="left:26px;top:559px;width:1319px;height:1px;background:#d4d4d4;"></div>
<div class="r" style="left:0px;top:559px;width:25px;height:1px;background:#c8c8c8;"></div>
<div class="r" style="left:26px;top:576px;width:1319px;height:1px;background:#d4d4d4;"></div>
<div class="r" style="left:0px;top:576px;width:25px;height:1px;background:#c8c8c8;"></div>
<div class="r" style="left:26px;top:593px;width:1319px;height:1px;background:#d4d4d4;"></div>
<div class="r" style="left:0px;top:593px;width:25px;height:1px;background:#c8c8c8;"></div>
<div class="r" style="left:26px;top:610px;width:1319px;height:1px;background:#d4d4d4;"></div>
<div class="r" style="left:0px;top:610px;width:25px;height:1px;background:#c8c8c8;"></div>
<div class="r" style="left:26px;top:627px;width:1319px;height:1px;background:#d4d4d4;"></div>
<div class="r" style="left:0px;top:627px;width:25px;height:1px;background:#c8c8c8;"></div>
<div class="r" style="left:26px;top:644px;width:1319px;height:1px;background:#d4d4d4;"></div>
<div class="r" style="left:0px;top:644px;width:25px;height:1px;background:#c8c8c8;"></div>
<div class="r" style="left:26px;top:661px;width:1319px;height:1px;background:#d4d4d4;"></div>
<div class="r" style="left:0px;top:661px;width:25px;height:1px;background:#c8c8c8;"></div>
<div class="r" style="left:26px;top:678px;width:1319px;height:1px;background:#d4d4d4;"></div>
<div class="r" style="left:0px;top:678px;width:25px;height:1px;background:#c8c8c8;"></div>
<div class="r" style="left:26px;top:220px;width:160px;height:16px;background:#c0c0c0;"></div>
<div class="r" style="left:186px;top:220px;width:1px;height:17px;background:#000000;"></div>
<div class="r" style="left:187px;top:220px;width:208px;height:16px;background:#c0c0c0;"></div>
<div class="r" style="left:395px;top:220px;width:1px;height:17px;background:#000000;"></div>
<div class="r" style="left:396px;top:220px;width:214px;height:16px;background:#c0c0c0;"></div>
<div class="r" style="left:610px;top:220px;width:1px;height:17px;background:#000000;"></div>
<div class="r" style="left:611px;top:220px;width:36px;height:16px;background:#c0c0c0;"></div>
<div class="r" style="left:647px;top:220px;width:1px;height:17px;background:#000000;"></div>
<div class="r" style="left:648px;top:220px;width:212px;height:16px;background:#c0c0c0;"></div>
<div class="r" style="left:860px;top:220px;width:1px;height:17px;background:#000000;"></div>
<div class="r" style="left:861px;top:220px;width:196px;height:16px;background:#c0c0c0;"></div>
<div class="r" style="left:1057px;top:220px;width:1px;height:17px;background:#000000;"></div>
<div class="r" style="left:26px;top:236px;width:1032px;height:1px;background:#000000;"></div>
<div class="r" style="left:26px;top:219px;width:1032px;height:1px;background:#9a9a9a;"></div>
<span class="t" style="left:85.20px;top:224.00px;font-size:11px;color:#000000;transform:scaleX(0.8865);">NOMBRE</span>
<span class="t" style="left:251.00px;top:224.00px;font-size:11px;color:#000000;transform:scaleX(0.9523);">RAZON SOCIAL</span>
<span class="t" style="left:478.00px;top:224.00px;font-size:11px;color:#000000;transform:scaleX(0.8529);">DOMICILIO</span>
<span class="t" style="left:624.00px;top:224.00px;font-size:11px;color:#000000;transform:scaleX(0.6923);">C</span>
<span class="t" style="left:731.30px;top:224.00px;font-size:11px;color:#000000;transform:scaleX(0.9169);">COLONIA</span>
<span class="t" style="left:930.30px;top:224.00px;font-size:11px;color:#000000;transform:scaleX(0.9098);">POBLACION</span>
<div class="r" style="left:170px;top:220px;width:16px;height:16px;background:#fdfdfd;box-sizing:border-box;border:1px solid #e0e0e0;border-left-color:#c4c4c4;border-top-color:#d6d6d6;"></div>
<svg class="r" style="left:170px;top:220px;" width="16" height="16" viewBox="0 0 16 16"><path d="M5.4 2.9 H14.2 L11.3 5.2 V10.6 H8.3 V5.2 Z" fill="#5f5f5f"/><path d="M2.2 9.2 H7.2 L4.7 11.8 Z" fill="#5f5f5f"/></svg>
<div class="r" style="left:379px;top:220px;width:16px;height:16px;background:#fdfdfd;box-sizing:border-box;border:1px solid #e0e0e0;border-left-color:#c4c4c4;border-top-color:#d6d6d6;"></div>
<svg class="r" style="left:379px;top:220px;" width="16" height="16" viewBox="0 0 16 16"><path d="M3.9 6 H11.3 L7.6 10 Z" fill="#6a6a6a"/></svg>
<div class="r" style="left:594px;top:220px;width:16px;height:16px;background:#fdfdfd;box-sizing:border-box;border:1px solid #e0e0e0;border-left-color:#c4c4c4;border-top-color:#d6d6d6;"></div>
<svg class="r" style="left:594px;top:220px;" width="16" height="16" viewBox="0 0 16 16"><path d="M3.9 6 H11.3 L7.6 10 Z" fill="#6a6a6a"/></svg>
<div class="r" style="left:631px;top:220px;width:16px;height:16px;background:#fdfdfd;box-sizing:border-box;border:1px solid #e0e0e0;border-left-color:#c4c4c4;border-top-color:#d6d6d6;"></div>
<svg class="r" style="left:631px;top:220px;" width="16" height="16" viewBox="0 0 16 16"><path d="M3.9 6 H11.3 L7.6 10 Z" fill="#6a6a6a"/></svg>
<div class="r" style="left:844px;top:220px;width:16px;height:16px;background:#fdfdfd;box-sizing:border-box;border:1px solid #e0e0e0;border-left-color:#c4c4c4;border-top-color:#d6d6d6;"></div>
<svg class="r" style="left:844px;top:220px;" width="16" height="16" viewBox="0 0 16 16"><path d="M3.9 6 H11.3 L7.6 10 Z" fill="#6a6a6a"/></svg>
<div class="r" style="left:1041px;top:220px;width:16px;height:16px;background:#fdfdfd;box-sizing:border-box;border:1px solid #e0e0e0;border-left-color:#c4c4c4;border-top-color:#d6d6d6;"></div>
<svg class="r" style="left:1041px;top:220px;" width="16" height="16" viewBox="0 0 16 16"><path d="M3.9 6 H11.3 L7.6 10 Z" fill="#6a6a6a"/></svg>
<span class="t" style="left:8.84px;top:221.00px;font-size:14px;color:#262626;transform:scaleX(0.94);">1</span>
<span class="t" style="left:9.12px;top:238.00px;font-size:14px;color:#1c14a8;transform:scaleX(0.92);">5</span>
<span class="t" style="left:9.12px;top:255.00px;font-size:14px;color:#1c14a8;transform:scaleX(0.92);">6</span>
<span class="t" style="left:9.12px;top:272.00px;font-size:14px;color:#1c14a8;transform:scaleX(0.92);">7</span>
<span class="t" style="left:9.12px;top:289.00px;font-size:14px;color:#1c14a8;transform:scaleX(0.92);">8</span>
<span class="t" style="left:6.01px;top:306.00px;font-size:14px;color:#1c14a8;transform:scaleX(0.92);">11</span>
<div class="r" style="left:0px;top:303px;width:25px;height:1px;background:#b4b4b4;"></div>
<div class="r" style="left:0px;top:304px;width:25px;height:2px;background:#f2f2f2;"></div>
<div class="r" style="left:0px;top:306px;width:25px;height:1px;background:#c6c6c6;"></div>
<div class="r" style="left:0px;top:322px;width:25px;height:16px;background:#d2d2d2;"></div>
<div class="r" style="left:24px;top:321px;width:2px;height:18px;background:#217346;"></div>
<span class="t" style="left:5.54px;top:323.00px;font-size:14px;color:#1c14a8;transform:scaleX(0.92);">12</span>
<span class="t" style="left:5.54px;top:340.00px;font-size:14px;color:#1c14a8;transform:scaleX(0.92);">14</span>
<div class="r" style="left:0px;top:337px;width:25px;height:1px;background:#b4b4b4;"></div>
<div class="r" style="left:0px;top:338px;width:25px;height:2px;background:#f2f2f2;"></div>
<div class="r" style="left:0px;top:340px;width:25px;height:1px;background:#c6c6c6;"></div>
<span class="t" style="left:5.54px;top:357.00px;font-size:14px;color:#1c14a8;transform:scaleX(0.92);">28</span>
<div class="r" style="left:0px;top:354px;width:25px;height:1px;background:#b4b4b4;"></div>
<div class="r" style="left:0px;top:355px;width:25px;height:2px;background:#f2f2f2;"></div>
<div class="r" style="left:0px;top:357px;width:25px;height:1px;background:#c6c6c6;"></div>
<span class="t" style="left:5.54px;top:374.00px;font-size:14px;color:#1c14a8;transform:scaleX(0.92);">29</span>
<span class="t" style="left:5.54px;top:391.00px;font-size:14px;color:#1c14a8;transform:scaleX(0.92);">30</span>
<span class="t" style="left:5.54px;top:408.00px;font-size:14px;color:#1c14a8;transform:scaleX(0.92);">31</span>
<span class="t" style="left:5.54px;top:425.00px;font-size:14px;color:#1c14a8;transform:scaleX(0.92);">32</span>
<span class="t" style="left:5.54px;top:442.00px;font-size:14px;color:#1c14a8;transform:scaleX(0.92);">33</span>
<span class="t" style="left:5.54px;top:459.00px;font-size:14px;color:#1c14a8;transform:scaleX(0.92);">34</span>
<span class="t" style="left:5.54px;top:476.00px;font-size:14px;color:#1c14a8;transform:scaleX(0.92);">35</span>
<span class="t" style="left:5.54px;top:493.00px;font-size:14px;color:#1c14a8;transform:scaleX(0.92);">37</span>
<div class="r" style="left:0px;top:490px;width:25px;height:1px;background:#b4b4b4;"></div>
<div class="r" style="left:0px;top:491px;width:25px;height:2px;background:#f2f2f2;"></div>
<div class="r" style="left:0px;top:493px;width:25px;height:1px;background:#c6c6c6;"></div>
<span class="t" style="left:5.54px;top:510.00px;font-size:14px;color:#1c14a8;transform:scaleX(0.92);">42</span>
<div class="r" style="left:0px;top:507px;width:25px;height:1px;background:#b4b4b4;"></div>
<div class="r" style="left:0px;top:508px;width:25px;height:2px;background:#f2f2f2;"></div>
<div class="r" style="left:0px;top:510px;width:25px;height:1px;background:#c6c6c6;"></div>
<span class="t" style="left:5.54px;top:527.00px;font-size:14px;color:#1c14a8;transform:scaleX(0.92);">43</span>
<span class="t" style="left:5.54px;top:544.00px;font-size:14px;color:#1c14a8;transform:scaleX(0.92);">45</span>
<div class="r" style="left:0px;top:541px;width:25px;height:1px;background:#b4b4b4;"></div>
<div class="r" style="left:0px;top:542px;width:25px;height:2px;background:#f2f2f2;"></div>
<div class="r" style="left:0px;top:544px;width:25px;height:1px;background:#c6c6c6;"></div>
<span class="t" style="left:5.54px;top:561.00px;font-size:14px;color:#1c14a8;transform:scaleX(0.92);">46</span>
<span class="t" style="left:5.54px;top:578.00px;font-size:14px;color:#1c14a8;transform:scaleX(0.92);">56</span>
<div class="r" style="left:0px;top:575px;width:25px;height:1px;background:#b4b4b4;"></div>
<div class="r" style="left:0px;top:576px;width:25px;height:2px;background:#f2f2f2;"></div>
<div class="r" style="left:0px;top:578px;width:25px;height:1px;background:#c6c6c6;"></div>
<span class="t" style="left:5.54px;top:595.00px;font-size:14px;color:#1c14a8;transform:scaleX(0.92);">57</span>
<span class="t" style="left:5.54px;top:612.00px;font-size:14px;color:#1c14a8;transform:scaleX(0.92);">58</span>
<span class="t" style="left:5.54px;top:629.00px;font-size:14px;color:#1c14a8;transform:scaleX(0.92);">59</span>
<span class="t" style="left:5.54px;top:646.00px;font-size:14px;color:#1c14a8;transform:scaleX(0.92);">60</span>
<span class="t" style="left:5.54px;top:663.00px;font-size:14px;color:#1c14a8;transform:scaleX(0.92);">61</span>
<span class="t" style="left:27.70px;top:241.00px;font-size:11px;color:#000000;transform:scaleX(0.9583);font-kerning:none;">SERV FYPSA</span>
<span class="t" style="left:188.70px;top:241.00px;font-size:11px;color:#000000;transform:scaleX(0.9540);font-kerning:none;">SERV Y AUTOPARTES FYPSA SRL CV</span>
<span class="t" style="left:397.70px;top:241.00px;font-size:11px;color:#000000;transform:scaleX(0.9250);font-kerning:none;">LERDO OTE NO 519</span>
<svg class="r" style="left:611px;top:237px;" width="7" height="7" viewBox="0 0 7 7"><path d="M0 0 H6 L0 6 Z" fill="#138a1c"/></svg>
<span class="t" style="left:613.30px;top:241.00px;font-size:11px;color:#000000;transform:scaleX(0.9676);font-kerning:none;">36970</span>
<span class="t" style="left:649.70px;top:241.00px;font-size:11px;color:#000000;transform:scaleX(0.8870);font-kerning:none;">CENTRO</span>
<span class="t" style="left:862.90px;top:241.00px;font-size:11px;color:#000000;transform:scaleX(0.9626);font-kerning:none;">ABASOLO GTO</span>
<span class="t" style="left:27.70px;top:258.00px;font-size:11px;color:#000000;transform:scaleX(0.9184);font-kerning:none;">SERV SAN ISIDRO</span>
<span class="t" style="left:188.70px;top:258.00px;font-size:11px;color:#000000;transform:scaleX(0.9243);font-kerning:none;">CRUZ AGUILERA RICARDO</span>
<span class="t" style="left:397.70px;top:258.00px;font-size:11px;color:#000000;transform:scaleX(0.9312);font-kerning:none;">CARR IRAPUATO LA PIEDAD KM27</span>
<svg class="r" style="left:611px;top:254px;" width="7" height="7" viewBox="0 0 7 7"><path d="M0 0 H6 L0 6 Z" fill="#138a1c"/></svg>
<span class="t" style="left:613.30px;top:258.00px;font-size:11px;color:#000000;transform:scaleX(0.9676);font-kerning:none;">36970</span>
<span class="t" style="left:649.70px;top:258.00px;font-size:11px;color:#000000;transform:scaleX(0.8870);font-kerning:none;">CENTRO</span>
<span class="t" style="left:862.90px;top:258.00px;font-size:11px;color:#000000;transform:scaleX(0.9626);font-kerning:none;">ABASOLO GTO</span>
<span class="t" style="left:27.70px;top:275.00px;font-size:11px;color:#000000;transform:scaleX(0.8898);font-kerning:none;">SERVIEXPRESS DELFINES</span>
<span class="t" style="left:188.70px;top:275.00px;font-size:11px;color:#000000;transform:scaleX(0.9146);font-kerning:none;">SERVIEXPRESS DELFINES SA CV</span>
<span class="t" style="left:397.70px;top:275.00px;font-size:11px;color:#000000;transform:scaleX(0.9320);font-kerning:none;">CARR IRAPUATO LA PIEDAD KM 34</span>
<svg class="r" style="left:611px;top:271px;" width="7" height="7" viewBox="0 0 7 7"><path d="M0 0 H6 L0 6 Z" fill="#138a1c"/></svg>
<span class="t" style="left:613.30px;top:275.00px;font-size:11px;color:#000000;transform:scaleX(0.9676);font-kerning:none;">36970</span>
<span class="t" style="left:649.70px;top:275.00px;font-size:11px;color:#000000;transform:scaleX(0.8997);font-kerning:none;">EL TEPOCATE</span>
<span class="t" style="left:862.90px;top:275.00px;font-size:11px;color:#000000;transform:scaleX(0.9626);font-kerning:none;">ABASOLO GTO</span>
<span class="t" style="left:27.70px;top:292.00px;font-size:11px;color:#000000;transform:scaleX(0.9545);font-kerning:none;">SERV SANTA ISABEL</span>
<span class="t" style="left:188.70px;top:292.00px;font-size:11px;color:#000000;transform:scaleX(0.9228);font-kerning:none;">CERVANTES LOPEZ JOSE O</span>
<span class="t" style="left:397.70px;top:292.00px;font-size:11px;color:#000000;transform:scaleX(0.9408);font-kerning:none;">CARR FED T AMOZOC  KM 20 560</span>
<svg class="r" style="left:611px;top:288px;" width="7" height="7" viewBox="0 0 7 7"><path d="M0 0 H6 L0 6 Z" fill="#138a1c"/></svg>
<span class="t" style="left:613.30px;top:292.00px;font-size:11px;color:#000000;transform:scaleX(0.9676);font-kerning:none;">75110</span>
<span class="t" style="left:649.70px;top:292.00px;font-size:11px;color:#000000;transform:scaleX(0.9289);font-kerning:none;">SANTA ISABEL TEPETZ</span>
<span class="t" style="left:862.90px;top:292.00px;font-size:11px;color:#000000;transform:scaleX(0.9044);font-kerning:none;">ACAJETE PUE</span>
<span class="t" style="left:27.70px;top:309.00px;font-size:11px;color:#000000;transform:scaleX(0.9607);font-kerning:none;">SERV ACAMBARO</span>
<span class="t" style="left:188.70px;top:309.00px;font-size:11px;color:#000000;transform:scaleX(0.9635);font-kerning:none;">SER ACAMBARO SACV</span>
<span class="t" style="left:397.70px;top:309.00px;font-size:11px;color:#000000;transform:scaleX(0.9240);font-kerning:none;">PROL V GUERRERO NO 184</span>
<svg class="r" style="left:611px;top:305px;" width="7" height="7" viewBox="0 0 7 7"><path d="M0 0 H6 L0 6 Z" fill="#138a1c"/></svg>
<span class="t" style="left:613.30px;top:309.00px;font-size:11px;color:#000000;transform:scaleX(0.9676);font-kerning:none;">38620</span>
<span class="t" style="left:649.70px;top:309.00px;font-size:11px;color:#000000;transform:scaleX(0.9224);font-kerning:none;">RANCHO GRANDE</span>
<span class="t" style="left:862.90px;top:309.00px;font-size:11px;color:#000000;transform:scaleX(0.9572);font-kerning:none;">ACAMBARO GTO</span>
<span class="t" style="left:27.70px;top:326.00px;font-size:11px;color:#000000;transform:scaleX(0.9128);font-kerning:none;">SERV GUERRERO DE ACAM</span>
<span class="t" style="left:188.70px;top:326.00px;font-size:11px;color:#000000;transform:scaleX(0.9321);font-kerning:none;">SERV GUERRERO DE ACAM SA CV</span>
<span class="t" style="left:397.70px;top:326.00px;font-size:11px;color:#000000;transform:scaleX(0.9743);font-kerning:none;">CARR ACAMBARO SALVAT KM 3.5</span>
<svg class="r" style="left:611px;top:322px;" width="7" height="7" viewBox="0 0 7 7"><path d="M0 0 H6 L0 6 Z" fill="#138a1c"/></svg>
<span class="t" style="left:613.30px;top:326.00px;font-size:11px;color:#000000;transform:scaleX(0.9676);font-kerning:none;">38620</span>
<span class="t" style="left:649.70px;top:326.00px;font-size:11px;color:#000000;transform:scaleX(0.9224);font-kerning:none;">RANCHO GRANDE</span>
<span class="t" style="left:862.90px;top:326.00px;font-size:11px;color:#000000;transform:scaleX(0.9572);font-kerning:none;">ACAMBARO GTO</span>
<span class="t" style="left:27.70px;top:343.00px;font-size:11px;color:#000000;transform:scaleX(0.9190);font-kerning:none;">SERV SIERRA HERMANOS</span>
<span class="t" style="left:188.70px;top:343.00px;font-size:11px;color:#000000;transform:scaleX(0.9351);font-kerning:none;">SERV SIERRA HERMANOS SA CV</span>
<span class="t" style="left:397.70px;top:343.00px;font-size:11px;color:#000000;transform:scaleX(0.9336);font-kerning:none;">CARR INTNAL MEX NOGALE KM 1042</span>
<svg class="r" style="left:611px;top:339px;" width="7" height="7" viewBox="0 0 7 7"><path d="M0 0 H6 L0 6 Z" fill="#138a1c"/></svg>
<span class="t" style="left:613.30px;top:343.00px;font-size:11px;color:#000000;transform:scaleX(0.9676);font-kerning:none;">63400</span>
<span class="t" style="left:649.70px;top:343.00px;font-size:11px;color:#000000;transform:scaleX(0.8870);font-kerning:none;">CENTRO</span>
<span class="t" style="left:862.90px;top:343.00px;font-size:11px;color:#000000;transform:scaleX(0.9623);font-kerning:none;">ACAPONETA NAY</span>
<span class="t" style="left:27.70px;top:360.00px;font-size:11px;color:#000000;transform:scaleX(0.9652);font-kerning:none;">SERV CAYACO</span>
<span class="t" style="left:188.70px;top:360.00px;font-size:11px;color:#000000;transform:scaleX(0.9533);font-kerning:none;">SERVICIO CAYACO SA CV</span>
<span class="t" style="left:397.70px;top:360.00px;font-size:11px;color:#000000;transform:scaleX(0.9339);font-kerning:none;">CARR NAL ACAP PINOTEPA KM 45.1</span>
<svg class="r" style="left:611px;top:356px;" width="7" height="7" viewBox="0 0 7 7"><path d="M0 0 H6 L0 6 Z" fill="#138a1c"/></svg>
<span class="t" style="left:613.30px;top:360.00px;font-size:11px;color:#000000;transform:scaleX(0.9676);font-kerning:none;">39905</span>
<span class="t" style="left:649.70px;top:360.00px;font-size:11px;color:#000000;transform:scaleX(0.9837);font-kerning:none;">CAYACO</span>
<span class="t" style="left:862.90px;top:360.00px;font-size:11px;color:#000000;transform:scaleX(0.9364);font-kerning:none;">ACAPULCO GRO</span>
<span class="t" style="left:27.70px;top:377.00px;font-size:11px;color:#000000;transform:scaleX(0.9260);font-kerning:none;">SERV DIAMANTE</span>
<span class="t" style="left:188.70px;top:377.00px;font-size:11px;color:#000000;transform:scaleX(0.9304);font-kerning:none;">SERVICIO DIAMANTE SA CV</span>
<span class="t" style="left:397.70px;top:377.00px;font-size:11px;color:#000000;transform:scaleX(0.9497);font-kerning:none;">BLVD DE LAS NACIONES NO 1 Y 2</span>
<svg class="r" style="left:611px;top:373px;" width="7" height="7" viewBox="0 0 7 7"><path d="M0 0 H6 L0 6 Z" fill="#138a1c"/></svg>
<span class="t" style="left:613.30px;top:377.00px;font-size:11px;color:#000000;transform:scaleX(0.9676);font-kerning:none;">39907</span>
<span class="t" style="left:649.70px;top:377.00px;font-size:11px;color:#000000;transform:scaleX(0.9361);font-kerning:none;">FRACC GRANJAS DEL MARQUEZ</span>
<span class="t" style="left:862.90px;top:377.00px;font-size:11px;color:#000000;transform:scaleX(0.9364);font-kerning:none;">ACAPULCO GRO</span>
<span class="t" style="left:27.70px;top:394.00px;font-size:11px;color:#000000;transform:scaleX(0.9706);font-kerning:none;">SERV MANTARRAYA</span>
<span class="t" style="left:188.70px;top:394.00px;font-size:11px;color:#000000;transform:scaleX(0.9775);font-kerning:none;">SERV MANTARRAYA SA CV</span>
<span class="t" style="left:397.70px;top:394.00px;font-size:11px;color:#000000;transform:scaleX(0.9492);font-kerning:none;">BLVD DLAS NACIONES KM 10.5 90</span>
<svg class="r" style="left:611px;top:390px;" width="7" height="7" viewBox="0 0 7 7"><path d="M0 0 H6 L0 6 Z" fill="#138a1c"/></svg>
<span class="t" style="left:613.30px;top:394.00px;font-size:11px;color:#000000;transform:scaleX(0.9676);font-kerning:none;">39699</span>
<span class="t" style="left:649.70px;top:394.00px;font-size:11px;color:#000000;transform:scaleX(0.9298);font-kerning:none;">JARDIN DE LOS AMATES</span>
<span class="t" style="left:862.90px;top:394.00px;font-size:11px;color:#000000;transform:scaleX(0.9364);font-kerning:none;">ACAPULCO GRO</span>
<span class="t" style="left:27.70px;top:411.00px;font-size:11px;color:#000000;transform:scaleX(0.9564);font-kerning:none;">SERV MANTARRAYA DEB</span>
<span class="t" style="left:188.70px;top:411.00px;font-size:11px;color:#000000;transform:scaleX(0.9774);font-kerning:none;">SERV MANTARRAYA SACV</span>
<span class="t" style="left:397.70px;top:411.00px;font-size:11px;color:#000000;transform:scaleX(0.9492);font-kerning:none;">BLVD DLAS NACIONES KM 10.5 90</span>
<svg class="r" style="left:611px;top:407px;" width="7" height="7" viewBox="0 0 7 7"><path d="M0 0 H6 L0 6 Z" fill="#138a1c"/></svg>
<span class="t" style="left:613.30px;top:411.00px;font-size:11px;color:#000000;transform:scaleX(0.9676);font-kerning:none;">39699</span>
<span class="t" style="left:649.70px;top:411.00px;font-size:11px;color:#000000;transform:scaleX(0.9088);font-kerning:none;">FRACC JARDIN PRINCESA</span>
<span class="t" style="left:862.90px;top:411.00px;font-size:11px;color:#000000;transform:scaleX(0.9364);font-kerning:none;">ACAPULCO GRO</span>
<span class="t" style="left:27.70px;top:428.00px;font-size:11px;color:#000000;transform:scaleX(0.9556);font-kerning:none;">SERV GONZALEZ</span>
<span class="t" style="left:188.70px;top:428.00px;font-size:11px;color:#000000;transform:scaleX(0.9299);font-kerning:none;">GONZALEZ MEDINA ANTONIO</span>
<span class="t" style="left:397.70px;top:428.00px;font-size:11px;color:#000000;transform:scaleX(0.9284);font-kerning:none;">CARR TULANCINGO HUSCA KM 11 SN</span>
<svg class="r" style="left:611px;top:424px;" width="7" height="7" viewBox="0 0 7 7"><path d="M0 0 H6 L0 6 Z" fill="#138a1c"/></svg>
<span class="t" style="left:613.30px;top:428.00px;font-size:11px;color:#000000;transform:scaleX(0.9676);font-kerning:none;">43540</span>
<span class="t" style="left:649.70px;top:428.00px;font-size:11px;color:#000000;transform:scaleX(0.9864);font-kerning:none;">ALMOLOYA</span>
<span class="t" style="left:862.90px;top:428.00px;font-size:11px;color:#000000;transform:scaleX(0.9575);font-kerning:none;">ACATLAN HGO</span>
<span class="t" style="left:27.70px;top:445.00px;font-size:11px;color:#000000;transform:scaleX(0.9196);font-kerning:none;">SERV MODELO</span>
<span class="t" style="left:188.70px;top:445.00px;font-size:11px;color:#000000;transform:scaleX(0.9212);font-kerning:none;">LOPEZ DOMINGUEZ RAFAEL</span>
<span class="t" style="left:397.70px;top:445.00px;font-size:11px;color:#000000;transform:scaleX(0.9429);font-kerning:none;">CARR FED ENT LIB VIA JALAPA</span>
<svg class="r" style="left:611px;top:441px;" width="7" height="7" viewBox="0 0 7 7"><path d="M0 0 H6 L0 6 Z" fill="#138a1c"/></svg>
<span class="t" style="left:613.30px;top:445.00px;font-size:11px;color:#000000;transform:scaleX(0.9676);font-kerning:none;">75150</span>
<span class="t" style="left:649.70px;top:445.00px;font-size:11px;color:#000000;transform:scaleX(0.8870);font-kerning:none;">CENTRO</span>
<span class="t" style="left:862.90px;top:445.00px;font-size:11px;color:#000000;transform:scaleX(0.9238);font-kerning:none;">ACATZINGO PUE</span>
<span class="t" style="left:27.70px;top:462.00px;font-size:11px;color:#000000;transform:scaleX(0.9626);font-kerning:none;">SERV G Y G</span>
<span class="t" style="left:188.70px;top:462.00px;font-size:11px;color:#000000;transform:scaleX(0.9433);font-kerning:none;">GARCIA Y GARCIA JOSE LUIS</span>
<span class="t" style="left:397.70px;top:462.00px;font-size:11px;color:#000000;transform:scaleX(0.9284);font-kerning:none;">CARR MEX TUXPAN KM 166</span>
<svg class="r" style="left:611px;top:458px;" width="7" height="7" viewBox="0 0 7 7"><path d="M0 0 H6 L0 6 Z" fill="#138a1c"/></svg>
<span class="t" style="left:613.30px;top:462.00px;font-size:11px;color:#000000;transform:scaleX(0.9676);font-kerning:none;">43720</span>
<span class="t" style="left:649.70px;top:462.00px;font-size:11px;color:#000000;transform:scaleX(0.9460);font-kerning:none;">VENTA QUEMADA</span>
<span class="t" style="left:862.90px;top:462.00px;font-size:11px;color:#000000;transform:scaleX(0.9412);font-kerning:none;">ACAXOCHITLAN HGO</span>
<span class="t" style="left:27.70px;top:479.00px;font-size:11px;color:#000000;transform:scaleX(0.9434);font-kerning:none;">SERV G Y G DEB</span>
<span class="t" style="left:188.70px;top:479.00px;font-size:11px;color:#000000;transform:scaleX(0.9433);font-kerning:none;">GARCIA Y GARCIA JOSE LUIS</span>
<span class="t" style="left:397.70px;top:479.00px;font-size:11px;color:#000000;transform:scaleX(0.9284);font-kerning:none;">CARR MEX TUXPAN KM 166</span>
<svg class="r" style="left:611px;top:475px;" width="7" height="7" viewBox="0 0 7 7"><path d="M0 0 H6 L0 6 Z" fill="#138a1c"/></svg>
<span class="t" style="left:613.30px;top:479.00px;font-size:11px;color:#000000;transform:scaleX(0.9676);font-kerning:none;">43720</span>
<span class="t" style="left:649.70px;top:479.00px;font-size:11px;color:#000000;transform:scaleX(0.9460);font-kerning:none;">VENTA QUEMADA</span>
<span class="t" style="left:862.90px;top:479.00px;font-size:11px;color:#000000;transform:scaleX(0.9412);font-kerning:none;">ACAXOCHITLAN HGO</span>
<span class="t" style="left:27.70px;top:496.00px;font-size:11px;color:#000000;transform:scaleX(0.9176);font-kerning:none;">SERVI FACIL</span>
<span class="t" style="left:188.70px;top:496.00px;font-size:11px;color:#000000;transform:scaleX(0.9303);font-kerning:none;">SERV FACIL DEL SURESTE SA CV</span>
<span class="t" style="left:397.70px;top:496.00px;font-size:11px;color:#000000;transform:scaleX(0.9321);font-kerning:none;">CARR COSTERA DEL GOLFO KM 226</span>
<svg class="r" style="left:611px;top:492px;" width="7" height="7" viewBox="0 0 7 7"><path d="M0 0 H6 L0 6 Z" fill="#138a1c"/></svg>
<span class="t" style="left:613.30px;top:496.00px;font-size:11px;color:#000000;transform:scaleX(0.9676);font-kerning:none;">96000</span>
<span class="t" style="left:649.70px;top:496.00px;font-size:11px;color:#000000;transform:scaleX(0.8870);font-kerning:none;">CENTRO</span>
<span class="t" style="left:862.90px;top:496.00px;font-size:11px;color:#000000;transform:scaleX(0.9677);font-kerning:none;">ACAYUCAN VER</span>
<span class="t" style="left:27.70px;top:513.00px;font-size:11px;color:#000000;transform:scaleX(0.9354);font-kerning:none;">SERV ACEVEDO</span>
<span class="t" style="left:188.70px;top:513.00px;font-size:11px;color:#000000;transform:scaleX(0.9385);font-kerning:none;">ANGELES CABALLERO OFELIA</span>
<span class="t" style="left:397.70px;top:513.00px;font-size:11px;color:#000000;transform:scaleX(0.9323);font-kerning:none;">CARR MEX LARE NO KM 119</span>
<svg class="r" style="left:611px;top:509px;" width="7" height="7" viewBox="0 0 7 7"><path d="M0 0 H6 L0 6 Z" fill="#138a1c"/></svg>
<span class="t" style="left:613.30px;top:513.00px;font-size:11px;color:#000000;transform:scaleX(0.9676);font-kerning:none;">42500</span>
<span class="t" style="left:649.70px;top:513.00px;font-size:11px;color:#000000;transform:scaleX(0.8870);font-kerning:none;">CENTRO</span>
<span class="t" style="left:862.90px;top:513.00px;font-size:11px;color:#000000;transform:scaleX(0.9349);font-kerning:none;">ACTOPAN HGO</span>
<span class="t" style="left:27.70px;top:530.00px;font-size:11px;color:#000000;transform:scaleX(0.9322);font-kerning:none;">SERV GASOLINERO DAMG</span>
<span class="t" style="left:188.70px;top:530.00px;font-size:11px;color:#000000;transform:scaleX(0.9657);font-kerning:none;">DAMG SA CV</span>
<span class="t" style="left:397.70px;top:530.00px;font-size:11px;color:#000000;transform:scaleX(0.9057);font-kerning:none;">PRL EFREN REBOLLEDO NO 344</span>
<svg class="r" style="left:611px;top:526px;" width="7" height="7" viewBox="0 0 7 7"><path d="M0 0 H6 L0 6 Z" fill="#138a1c"/></svg>
<span class="t" style="left:613.30px;top:530.00px;font-size:11px;color:#000000;transform:scaleX(0.9676);font-kerning:none;">42500</span>
<span class="t" style="left:649.70px;top:530.00px;font-size:11px;color:#000000;transform:scaleX(0.8870);font-kerning:none;">CENTRO</span>
<span class="t" style="left:862.90px;top:530.00px;font-size:11px;color:#000000;transform:scaleX(0.9349);font-kerning:none;">ACTOPAN HGO</span>
<span class="t" style="left:27.70px;top:547.00px;font-size:11px;color:#000000;transform:scaleX(0.9120);font-kerning:none;">SERV TREVINO</span>
<span class="t" style="left:188.70px;top:547.00px;font-size:11px;color:#000000;transform:scaleX(0.9400);font-kerning:none;">SERV TREVINO DE ACUNA SA CV</span>
<span class="t" style="left:397.70px;top:547.00px;font-size:11px;color:#000000;transform:scaleX(0.9169);font-kerning:none;">H COLEGIO MILITAR NO 490</span>
<svg class="r" style="left:611px;top:543px;" width="7" height="7" viewBox="0 0 7 7"><path d="M0 0 H6 L0 6 Z" fill="#138a1c"/></svg>
<span class="t" style="left:613.30px;top:547.00px;font-size:11px;color:#000000;transform:scaleX(0.9676);font-kerning:none;">26278</span>
<span class="t" style="left:649.70px;top:547.00px;font-size:11px;color:#000000;transform:scaleX(0.8901);font-kerning:none;">ONCE DE OCTUBRE</span>
<span class="t" style="left:862.90px;top:547.00px;font-size:11px;color:#000000;transform:scaleX(0.9476);font-kerning:none;">ACUNA COAH</span>
<span class="t" style="left:27.70px;top:564.00px;font-size:11px;color:#000000;transform:scaleX(0.9394);font-kerning:none;">SERV JUAREZ</span>
<span class="t" style="left:188.70px;top:564.00px;font-size:11px;color:#000000;transform:scaleX(0.9291);font-kerning:none;">RIVERA QUINTANAR ALFREDO</span>
<span class="t" style="left:397.70px;top:564.00px;font-size:11px;color:#000000;transform:scaleX(0.8877);font-kerning:none;">DOMICILIO CONOCIDO SN</span>
<svg class="r" style="left:611px;top:560px;" width="7" height="7" viewBox="0 0 7 7"><path d="M0 0 H6 L0 6 Z" fill="#138a1c"/></svg>
<span class="t" style="left:613.30px;top:564.00px;font-size:11px;color:#000000;transform:scaleX(0.9676);font-kerning:none;">96680</span>
<span class="t" style="left:649.70px;top:564.00px;font-size:11px;color:#000000;transform:scaleX(0.9183);font-kerning:none;">BENITO JUAREZ</span>
<span class="t" style="left:862.90px;top:564.00px;font-size:11px;color:#000000;transform:scaleX(0.9363);font-kerning:none;">AGUA DULCE VER</span>
<span class="t" style="left:27.70px;top:581.00px;font-size:11px;color:#000000;transform:scaleX(0.9495);font-kerning:none;">SERV AVENIDA</span>
<span class="t" style="left:188.70px;top:581.00px;font-size:11px;color:#000000;transform:scaleX(0.9644);font-kerning:none;">SERV AVENIDA SA CV</span>
<span class="t" style="left:397.70px;top:581.00px;font-size:11px;color:#000000;transform:scaleX(0.9414);font-kerning:none;">AV D LA CONVENCION NTE NO 1902</span>
<svg class="r" style="left:611px;top:577px;" width="7" height="7" viewBox="0 0 7 7"><path d="M0 0 H6 L0 6 Z" fill="#138a1c"/></svg>
<span class="t" style="left:613.30px;top:581.00px;font-size:11px;color:#000000;transform:scaleX(0.9676);font-kerning:none;">20020</span>
<span class="t" style="left:649.70px;top:581.00px;font-size:11px;color:#000000;transform:scaleX(0.9112);font-kerning:none;">BUENOS AIRES</span>
<span class="t" style="left:862.90px;top:581.00px;font-size:11px;color:#000000;transform:scaleX(0.9450);font-kerning:none;">AGUASCALIENTES AGS</span>
<span class="t" style="left:27.70px;top:598.00px;font-size:11px;color:#000000;transform:scaleX(0.9252);font-kerning:none;">SERV GASOLINEROS D MEX</span>
<span class="t" style="left:188.70px;top:598.00px;font-size:11px;color:#000000;transform:scaleX(0.9405);font-kerning:none;">SERV GASOLINEROS MEX SACV</span>
<span class="t" style="left:397.70px;top:598.00px;font-size:11px;color:#000000;transform:scaleX(0.9500);font-kerning:none;">AV AGUASCALIENTES SUR NO 3402</span>
<svg class="r" style="left:611px;top:594px;" width="7" height="7" viewBox="0 0 7 7"><path d="M0 0 H6 L0 6 Z" fill="#138a1c"/></svg>
<span class="t" style="left:613.30px;top:598.00px;font-size:11px;color:#000000;transform:scaleX(0.9676);font-kerning:none;">20289</span>
<span class="t" style="left:649.70px;top:598.00px;font-size:11px;color:#000000;transform:scaleX(0.9229);font-kerning:none;">PRADOS DEL SUR</span>
<span class="t" style="left:862.90px;top:598.00px;font-size:11px;color:#000000;transform:scaleX(0.9450);font-kerning:none;">AGUASCALIENTES AGS</span>
<span class="t" style="left:27.70px;top:615.00px;font-size:11px;color:#000000;transform:scaleX(0.9252);font-kerning:none;">SERV GASOLINEROS D MEX</span>
<span class="t" style="left:188.70px;top:615.00px;font-size:11px;color:#000000;transform:scaleX(0.9405);font-kerning:none;">SERV GASOLINEROS MEX SACV</span>
<span class="t" style="left:397.70px;top:615.00px;font-size:11px;color:#000000;transform:scaleX(0.9471);font-kerning:none;">AV AGUASCALIENTES NTE NO 724</span>
<svg class="r" style="left:611px;top:611px;" width="7" height="7" viewBox="0 0 7 7"><path d="M0 0 H6 L0 6 Z" fill="#138a1c"/></svg>
<span class="t" style="left:613.30px;top:615.00px;font-size:11px;color:#000000;transform:scaleX(0.9676);font-kerning:none;">20130</span>
<span class="t" style="left:649.70px;top:615.00px;font-size:11px;color:#000000;transform:scaleX(0.8870);font-kerning:none;">CENTRO</span>
<span class="t" style="left:862.90px;top:615.00px;font-size:11px;color:#000000;transform:scaleX(0.9450);font-kerning:none;">AGUASCALIENTES AGS</span>
<span class="t" style="left:27.70px;top:632.00px;font-size:11px;color:#000000;transform:scaleX(0.9252);font-kerning:none;">SERV GASOLINEROS D MEX</span>
<span class="t" style="left:188.70px;top:632.00px;font-size:11px;color:#000000;transform:scaleX(0.9257);font-kerning:none;">SERV GASOLINEROS MEX S</span>
<span class="t" style="left:397.70px;top:632.00px;font-size:11px;color:#000000;transform:scaleX(0.8989);font-kerning:none;">DOM CONOCIDO</span>
<svg class="r" style="left:611px;top:628px;" width="7" height="7" viewBox="0 0 7 7"><path d="M0 0 H6 L0 6 Z" fill="#138a1c"/></svg>
<span class="t" style="left:613.30px;top:632.00px;font-size:11px;color:#000000;transform:scaleX(0.9676);font-kerning:none;">20040</span>
<span class="t" style="left:649.70px;top:632.00px;font-size:11px;color:#000000;transform:scaleX(0.8896);font-kerning:none;">CURTIDORES</span>
<span class="t" style="left:862.90px;top:632.00px;font-size:11px;color:#000000;transform:scaleX(0.9450);font-kerning:none;">AGUASCALIENTES AGS</span>
<span class="t" style="left:27.70px;top:649.00px;font-size:11px;color:#000000;transform:scaleX(0.9252);font-kerning:none;">SERV GASOLINEROS D MEX</span>
<span class="t" style="left:188.70px;top:649.00px;font-size:11px;color:#000000;transform:scaleX(0.9405);font-kerning:none;">SERV GASOLINEROS MEX SACV</span>
<span class="t" style="left:397.70px;top:649.00px;font-size:11px;color:#000000;transform:scaleX(0.9317);font-kerning:none;">AV DE LA COMUNICACION NTE 406</span>
<svg class="r" style="left:611px;top:645px;" width="7" height="7" viewBox="0 0 7 7"><path d="M0 0 H6 L0 6 Z" fill="#138a1c"/></svg>
<span class="t" style="left:613.30px;top:649.00px;font-size:11px;color:#000000;transform:scaleX(0.9676);font-kerning:none;">20030</span>
<span class="t" style="left:649.70px;top:649.00px;font-size:11px;color:#000000;transform:scaleX(0.9102);font-kerning:none;">GREMIAL FERROCARRILERA</span>
<span class="t" style="left:862.90px;top:649.00px;font-size:11px;color:#000000;transform:scaleX(0.9450);font-kerning:none;">AGUASCALIENTES AGS</span>
<span class="t" style="left:27.70px;top:666.00px;font-size:11px;color:#000000;transform:scaleX(0.9196);font-kerning:none;">SERV GIACINTI</span>
<span class="t" style="left:188.70px;top:666.00px;font-size:11px;color:#000000;transform:scaleX(0.9267);font-kerning:none;">SERV GIACINTI SA</span>
<span class="t" style="left:397.70px;top:666.00px;font-size:11px;color:#000000;transform:scaleX(0.9734);font-kerning:none;">BLVD A ZACATECAS NO 304</span>
<svg class="r" style="left:611px;top:662px;" width="7" height="7" viewBox="0 0 7 7"><path d="M0 0 H6 L0 6 Z" fill="#138a1c"/></svg>
<span class="t" style="left:613.30px;top:666.00px;font-size:11px;color:#000000;transform:scaleX(0.9676);font-kerning:none;">20137</span>
<span class="t" style="left:649.70px;top:666.00px;font-size:11px;color:#000000;transform:scaleX(0.9335);font-kerning:none;">EL PLATEADO</span>
<span class="t" style="left:862.90px;top:666.00px;font-size:11px;color:#000000;transform:scaleX(0.9450);font-kerning:none;">AGUASCALIENTES AGS</span>
<div class="r" style="left:1056px;top:321px;width:149px;height:19px;background:transparent;box-sizing:border-box;border:2px solid #217346;"></div>
<div class="r" style="left:1201px;top:336px;width:6px;height:6px;background:#ffffff;"></div>
<div class="r" style="left:1202px;top:337px;width:5px;height:5px;background:#217346;"></div>
<div class="r" style="left:1204px;top:219px;width:141px;height:1px;background:#a6a6a6;"></div>
<div class="r" style="left:1344px;top:219px;width:1px;height:460px;background:#a6a6a6;"></div>
<div class="r" style="left:1345px;top:203px;width:21px;height:475px;background:#e6e6e6;"></div>
<div class="r" style="left:1348px;top:237px;width:15px;height:427px;background:#dbdbdb;"></div>
<div class="r" style="left:1348px;top:205px;width:15px;height:14px;background:#ffffff;box-sizing:border-box;border:1px solid #c9c9c9;"></div>
<svg class="r" style="left:1348px;top:205px;" width="15" height="14" viewBox="0 0 15 14"><path d="M3.8 9 L7.5 5 L11.2 9 Z" fill="#777"/></svg>
<div class="r" style="left:1348px;top:220px;width:15px;height:17px;background:#ffffff;box-sizing:border-box;border:1px solid #c9c9c9;"></div>
<div class="r" style="left:1348px;top:664px;width:15px;height:14px;background:#ffffff;box-sizing:border-box;border:1px solid #c9c9c9;"></div>
<svg class="r" style="left:1348px;top:664px;" width="15" height="14" viewBox="0 0 15 14"><path d="M3.8 5.5 L7.5 9.5 L11.2 5.5 Z" fill="#777"/></svg>
<div class="r" style="left:0px;top:678px;width:1366px;height:28px;background:#e6e6e6;"></div>
<div class="r" style="left:0px;top:678px;width:1345px;height:1px;background:#ababab;"></div>
<div class="r" style="left:100px;top:678px;width:66px;height:23px;background:#ffffff;"></div>
<div class="r" style="left:100px;top:701px;width:66px;height:2px;background:#217346;"></div>
<div class="r" style="left:100px;top:679px;width:1px;height:22px;background:#c8c8c8;"></div>
<div class="r" style="left:165px;top:679px;width:1px;height:22px;background:#c8c8c8;"></div>
<span class="t" style="left:112.50px;top:684.00px;font-size:13.5px;color:#217346;font-weight:bold;transform:scaleX(0.9657);">detalle</span>
<svg class="r" style="left:24px;top:686px;" width="10" height="12" viewBox="0 0 10 12"><path d="M7 1.5 L2.5 6 L7 10.5 Z" fill="#c3c3c3"/></svg>
<svg class="r" style="left:53px;top:686px;" width="10" height="12" viewBox="0 0 10 12"><path d="M3 1.5 L7.5 6 L3 10.5 Z" fill="#c3c3c3"/></svg>
<svg class="r" style="left:198px;top:683px;" width="18" height="18" viewBox="0 0 18 18"><circle cx="9" cy="9" r="7.5" fill="none" stroke="#6e6e6e" stroke-width="1.1"/><path d="M9 5 V13 M5 9 H13" stroke="#6e6e6e" stroke-width="1.6"/></svg>
<div class="r" style="left:819px;top:687px;width:2px;height:2px;background:#a0a0a0;"></div>
<div class="r" style="left:819px;top:691px;width:2px;height:2px;background:#a0a0a0;"></div>
<div class="r" style="left:819px;top:695px;width:2px;height:2px;background:#a0a0a0;"></div>
<div class="r" style="left:837px;top:685px;width:14px;height:15px;background:#ffffff;box-sizing:border-box;border:1px solid #c4c4c4;"></div>
<svg class="r" style="left:837px;top:685px;" width="14" height="15" viewBox="0 0 14 15"><path d="M9 4 L5 7.5 L9 11 Z" fill="#555"/></svg>
<div class="r" style="left:851px;top:685px;width:419px;height:15px;background:#ffffff;box-sizing:border-box;border:1px solid #c4c4c4;"></div>
<div class="r" style="left:1270px;top:685px;width:63px;height:15px;background:#dcdcdc;"></div>
<div class="r" style="left:1333px;top:685px;width:14px;height:15px;background:#ffffff;box-sizing:border-box;border:1px solid #c4c4c4;"></div>
<svg class="r" style="left:1333px;top:685px;" width="14" height="15" viewBox="0 0 14 15"><path d="M5 4 L9 7.5 L5 11 Z" fill="#555"/></svg>
<div class="r" style="left:0px;top:706px;width:1366px;height:1px;background:#c9c9c9;"></div>
<div class="r" style="left:0px;top:707px;width:1366px;height:21px;background:#f3f3f3;"></div>
<span class="t" style="left:7.50px;top:711.00px;font-size:12px;color:#3b3b3b;transform:scaleX(0.9034);">Listo</span>
<span class="t" style="left:47.30px;top:711.00px;font-size:12px;color:#3b3b3b;transform:scaleX(0.9421);">Se encontraron 1055 de 2908 registros</span>
<svg class="r" style="left:264px;top:710px;" width="14" height="13" viewBox="0 0 14 13"><circle cx="3.2" cy="3.2" r="3" fill="#5f5f5f"/><path d="M1.5 5.5 H12.5 V12 H1.5 Z" fill="none" stroke="#5f5f5f" stroke-width="1.2"/><path d="M7 2 H12.5 V5" fill="none" stroke="#5f5f5f" stroke-width="1.2"/><path d="M3.5 8 H5 M6.5 8 H8 M9.5 8 H11 M3.5 10 H5 M6.5 10 H8 M9.5 10 H11" stroke="#5f5f5f" stroke-width="1.1"/></svg>
<div class="r" style="left:1081px;top:707px;width:37px;height:21px;background:#c6c6c6;"></div>
<svg class="r" style="left:1091px;top:710px;" width="15" height="14" viewBox="0 0 15 14"><path d="M1.5 1.5 H13.5 V12.5 H1.5 Z M1.5 5 H13.5 M1.5 8.7 H13.5 M5.5 1.5 V12.5 M9.5 1.5 V12.5" fill="none" stroke="#5a5a5a" stroke-width="1"/></svg>
<svg class="r" style="left:1129px;top:710px;" width="15" height="14" viewBox="0 0 15 14"><path d="M1.5 1.5 H13.5 V12.5 H1.5 Z" fill="none" stroke="#5a5a5a" stroke-width="1"/><path d="M4.5 4.5 H10.5 V10.5 H4.5 Z M6 6.5 H9 M6 8.5 H9" fill="none" stroke="#5a5a5a" stroke-width="1"/></svg>
<svg class="r" style="left:1168px;top:710px;" width="15" height="14" viewBox="0 0 15 14"><path d="M1.5 1.5 H13.5 V12.5 H1.5 Z M5.5 1.5 V7.5 H10 V1.5" fill="none" stroke="#5a5a5a" stroke-width="1"/></svg>
<div class="r" style="left:1198px;top:716px;width:7px;height:2px;background:#5a5a5a;"></div>
<div class="r" style="left:1209px;top:716px;width:100px;height:1px;background:#9a9a9a;"></div>
<div class="r" style="left:1257px;top:710px;width:5px;height:13px;background:#5a5a5a;"></div>
<div class="r" style="left:1312px;top:716px;width:9px;height:2px;background:#5a5a5a;"></div>
<div class="r" style="left:1315.5px;top:713px;width:2px;height:8px;background:#5a5a5a;"></div>
<span class="t" style="left:1331.50px;top:710.30px;font-size:12px;color:#3b3b3b;transform:scaleX(0.8634);">100%</span>
<div class="r" style="left:0px;top:728px;width:1366px;height:40px;background:linear-gradient(90deg,#1f3a48 0%,#1e3443 35%,#1d2e40 65%,#1a2742 100%);"></div>
<div class="r" style="left:48px;top:728px;width:344px;height:40px;background:#f3f3f3;box-sizing:border-box;border-top:1px solid #d9d9d9;"></div>
<svg class="r" style="left:16px;top:740px;" width="16" height="16" viewBox="0 0 16 16"><path d="M0 2.3 L6.6 1.4 V7.6 H0 Z M7.4 1.3 L16 0 V7.6 H7.4 Z M0 8.4 H6.6 V14.6 L0 13.7 Z M7.4 8.4 H16 V16 L7.4 14.7 Z" fill="#ffffff"/></svg>
<svg class="r" style="left:60px;top:736px;" width="22" height="22" viewBox="0 0 22 22"><circle cx="12.5" cy="8.5" r="5.3" fill="none" stroke="#2b2b2b" stroke-width="1.4"/><path d="M8.8 12.4 L2 19.5" stroke="#2b2b2b" stroke-width="1.5"/></svg>
<span class="t" style="left:88.40px;top:741.00px;font-size:15.5px;color:#3f3f3f;transform:scaleX(0.9314);">Escribe aquí para buscar</span>
<svg class="r" style="left:318px;top:729px;" width="74" height="39" viewBox="0 0 74 39"><path d="M13 39 L30 27 L48 15 L62 21 L74 33 V39 Z" fill="#dccaa0"/><path d="M48 15 L62 21 L74 33 V39 H68 C66 30 58 24 48 15 Z" fill="#c9b383"/><path d="M62 21 C66 22 72 26 74 33 C70 30 66 28 62 27 Z" fill="#b89f6c"/><path d="M28 37 C32 31 36 29 42 26 M36 39 C40 33 46 31 52 27 M48 39 C50 36 54 34 56 32" stroke="#4a3fa0" stroke-width="1.3" fill="none"/><path d="M21 3 C27 2 31 9 30 16 C28 20 24 19 22 16 Z" fill="#3f9a45"/><path d="M6 30 C8 26 14 26 19 29 C16 32 10 33 6 30 Z" fill="#3f9a45"/><path d="M24 23 C34 27 50 26 62 22" stroke="#3f8f3c" stroke-width="2.4" fill="none" stroke-linecap="round"/><path d="M3 12 C3 5 9 2 15 3 C22 3 27 8 27 15 C28 22 22 28 15 28 C8 28 4 24 3 18 C1 16 2 13 3 12 Z" fill="#ee5a42"/><path d="M4 11 C6 4 20 2 25 9 C21 6 12 7 10 14 Z" fill="#f68a76"/><path d="M5 19 C8 27 20 30 26 21 C20 26 11 24 9 18 Z" fill="#d83a28"/><circle cx="13" cy="13" r="4.5" fill="#f47c68"/><path d="M10 13 C11 9 16 9 17 13" fill="none" stroke="#d94a38" stroke-width="1"/></svg>
<svg class="r" style="left:407px;top:739px;" width="18" height="17" viewBox="0 0 18 17"><path d="M1 1.5 V0.6 H11 V1.5 M1 15.5 V16.4 H11 V15.5" fill="none" stroke="#fff" stroke-width="1.2"/><rect x="1" y="4" width="10" height="9" fill="none" stroke="#fff" stroke-width="1.2"/><path d="M15 0.4 V3.6 M15 9.4 V16.4" stroke="#fff" stroke-width="1.2"/><rect x="13.6" y="4.6" width="2.8" height="3.2" fill="#fff"/></svg>
<svg class="r" style="left:454px;top:735px;" width="26" height="26" viewBox="0 0 26 26"><defs><linearGradient id="eg1" x1="0" y1="0" x2="1" y2="1"><stop offset="0" stop-color="#35c1f1"/><stop offset="1" stop-color="#1b6fc2"/></linearGradient><linearGradient id="eg2" x1="0" y1="0" x2="1" y2="0"><stop offset="0" stop-color="#2aa7e0"/><stop offset="1" stop-color="#62d368"/></linearGradient></defs><circle cx="13" cy="13" r="12.2" fill="url(#eg1)"/><path d="M1.2 10 C3 2 12 -1 19 2.5 C24 5 26 10 24.8 14 C24 17 20 18 16.5 17 C18 15 17.6 11 13.4 9.6 C8 8 3 11 1.2 14 Z" fill="url(#eg2)"/><path d="M9 13.5 C8 18 11 23 17 24.5 C12 26 5 23 3 17 C2 13 5 10.6 9 10.6 C12 10.6 13.5 12 13.6 13.6 C12 12.6 9.6 12.4 9 13.5 Z" fill="#155aa8"/><circle cx="12.4" cy="14.6" r="2.4" fill="#1e3240"/></svg>
<svg class="r" style="left:505px;top:738px;" width="22" height="19" viewBox="0 0 22 19"><path d="M0.5 1.5 C0.5 0.8 1 0.4 1.6 0.4 H7.6 L9.4 2.2 H20.4 C21 2.2 21.5 2.7 21.5 3.3 V17.4 C21.5 18 21 18.5 20.4 18.5 H1.6 C1 18.5 0.5 18 0.5 17.4 Z" fill="#f7c64a"/><path d="M0.5 1.5 C0.5 0.8 1 0.4 1.6 0.4 H7.6 L9.4 2.2 H0.5 Z" fill="#e0a52a"/><rect x="0.5" y="3.6" width="21" height="14.9" rx="1" fill="#fbd768"/><path d="M4.6 18.5 V11.4 C4.6 10.6 5.2 10 6 10 H16 C16.8 10 17.4 10.6 17.4 11.4 V18.5 H14.2 V13.2 H7.8 V18.5 Z" fill="#4b94d4"/><rect x="7.8" y="13.2" width="6.4" height="5.3" fill="#f3c851"/></svg>
<div class="r" style="left:496px;top:766px;width:40px;height:2px;background:#8fc5ef;"></div>
<svg class="r" style="left:552px;top:736px;" width="25" height="25" viewBox="0 0 25 25"><path d="M7.6 6.4 V3.6 C7.6 1.8 8.8 0.8 10.2 0.8 H14.8 C16.2 0.8 17.4 1.8 17.4 3.6 V6.4" fill="none" stroke="#3f9ae0" stroke-width="1.8"/><path d="M1 5.8 H24 V20.6 C24 22.6 22.6 24 20.6 24 H4.4 C2.4 24 1 22.6 1 20.6 Z" fill="#f4f4f4"/><rect x="7.4" y="9.4" width="4.6" height="4.6" fill="#f25022"/><rect x="13" y="9.4" width="4.6" height="4.6" fill="#7fba00"/><rect x="7.4" y="15" width="4.6" height="4.6" fill="#00a4ef"/><rect x="13" y="15" width="4.6" height="4.6" fill="#ffb900"/></svg>
<svg class="r" style="left:601px;top:736px;" width="26" height="24" viewBox="0 0 26 24"><path d="M0.8 8.6 L13 0.6 L25.2 8.6 Z" fill="#1565b8"/><rect x="0.8" y="8.4" width="24.4" height="14.8" fill="#35a8ee"/><path d="M3.4 8.6 H22.6 L13 16.4 Z" fill="#ffffff"/><path d="M0.8 23.2 L13 14.6 L25.2 23.2 Z" fill="#2191e0" opacity="0.9"/><path d="M13 15 L25.2 23.2 V12 Z" fill="#1a7fd2" opacity="0.55"/></svg>
<svg class="r" style="left:651px;top:736px;" width="25" height="25" viewBox="0 0 25 25"><circle cx="12.5" cy="12.5" r="12" fill="#fbc116"/><path d="M12.5 12.5 L2.1 6.5 A12 12 0 0 1 22.9 6.5 Z" fill="#e53f33"/><path d="M12.5 0.5 A12 12 0 0 1 22.9 6.5 H12.5 Z" fill="#e53f33"/><path d="M2.1 6.5 A12 12 0 0 0 9.5 24.1 L15.1 14 L12.5 12.5 Z" fill="#2da94f"/><path d="M2.1 6.5 L7.8 15.8 L12.5 12.5 Z" fill="#2da94f"/><path d="M9.5 24.1 A12 12 0 0 0 22.9 6.5 H13.5 L17.2 15.2 Z" fill="#fbc116"/><circle cx="12.5" cy="12.5" r="5.6" fill="#ffffff"/><circle cx="12.5" cy="12.5" r="4.4" fill="#4687f4"/></svg>
<div class="r" style="left:643px;top:766px;width:40px;height:2px;background:#8fc5ef;"></div>
<div class="r" style="left:688px;top:728px;width:48px;height:40px;background:#3d505c;"></div>
<div class="r" style="left:688px;top:766px;width:48px;height:2px;background:#9ccdf2;"></div>
<svg class="r" style="left:700px;top:738px;" width="24" height="19" viewBox="0 0 24 19"><rect x="8" y="0.5" width="15.5" height="18" rx="1" fill="#e9f3ec"/><path d="M12 3.4 H22 M12 6.6 H22 M12 9.8 H22 M12 13 H22 M12 16 H22 M16.8 1 V18 M20 1 V18" stroke="#1f7a48" stroke-width="1"/><rect x="0.2" y="2" width="14" height="15" fill="#18744a"/><path d="M3.6 5.4 L10.2 13.8 M10.2 5.4 L3.6 13.8" stroke="#fff" stroke-width="1.8"/></svg>
<svg class="r" style="left:748px;top:735px;" width="26" height="26" viewBox="0 0 26 26"><path d="M12 5 C4 5 0.6 10.6 1.4 15.4 C2.2 20 7.4 23.4 12.6 22 C15 21.2 14 18.6 15.8 17.6 C18 16.4 21.8 18 22.4 13.6 C23 8.6 18.4 5 12 5 Z" fill="#e8eef5" stroke="#9aa9ba" stroke-width="0.8"/><circle cx="6.2" cy="12" r="1.9" fill="#e34b3a"/><circle cx="10.4" cy="8.8" r="1.9" fill="#f2b43a"/><circle cx="15.4" cy="9.2" r="1.8" fill="#4aa85a"/><circle cx="6.8" cy="17" r="1.9" fill="#3f7fd0"/><path d="M12.6 20.6 L20.4 6.2 L22.4 7.4 L15 21.8 Z" fill="#d88f3e"/><path d="M20.4 6.2 L22.6 1.2 L24.6 2.4 L22.4 7.4 Z" fill="#f0c27a"/><path d="M12.6 20.6 L15 21.8 L12.4 24.6 Z" fill="#7a4a20"/></svg>
<div class="r" style="left:741px;top:766px;width:40px;height:2px;background:#8fc5ef;"></div>
<svg class="r" style="left:957px;top:736px;" width="26" height="25" viewBox="0 0 26 25"><defs><radialGradient id="sun" cx="0.4" cy="0.35" r="0.8"><stop offset="0" stop-color="#ffb13a"/><stop offset="1" stop-color="#f2711f"/></radialGradient></defs><circle cx="11.6" cy="12.6" r="10.4" fill="url(#sun)"/><circle cx="21" cy="2.8" r="2.6" fill="#d6302a"/></svg>
<span class="t" style="left:989.40px;top:741.00px;font-size:15.5px;color:#ffffff;transform:scaleX(0.8201);">24°C</span>
<span class="t" style="left:1027.50px;top:741.00px;font-size:15.5px;color:#ffffff;transform:scaleX(0.8649);">Soleado</span>
<svg class="r" style="left:1093px;top:743px;" width="13" height="10" viewBox="0 0 13 10"><path d="M1 8.4 L6.5 2 L12 8.4" fill="none" stroke="#fff" stroke-width="1.4"/></svg>
<svg class="r" style="left:1117px;top:739px;" width="14" height="18" viewBox="0 0 14 18"><rect x="1" y="4.4" width="8" height="8.4" rx="1.6" fill="none" stroke="#fff" stroke-width="1.2"/><path d="M9 7.4 L12.4 5.2 V12 L9 9.8" fill="none" stroke="#fff" stroke-width="1.1"/><path d="M2 2.6 C3.4 0.8 7 0.8 8.4 2.6 M2 14.8 C3.4 16.6 7 16.6 8.4 14.8" fill="none" stroke="#fff" stroke-width="1.1"/></svg>
<svg class="r" style="left:1138px;top:739px;" width="18" height="18" viewBox="0 0 18 18"><circle cx="9" cy="9" r="8.2" fill="#c9d92a"/><circle cx="9" cy="9" r="6" fill="#4aa02c"/><path d="M9 5 V13 M5 9 H13" stroke="#f5e23a" stroke-width="2.4"/></svg>
<svg class="r" style="left:1162px;top:740px;" width="18" height="17" viewBox="0 0 18 17"><rect x="3.6" y="1.8" width="12.8" height="8.8" fill="none" stroke="#fff" stroke-width="1.2"/><path d="M10 10.6 V14 M6 14.6 H14" stroke="#fff" stroke-width="1.2"/><rect x="0.8" y="0.6" width="4.4" height="6" fill="#1b2b44" stroke="#fff" stroke-width="1"/></svg>
<svg class="r" style="left:1187px;top:740px;" width="18" height="16" viewBox="0 0 18 16"><path d="M1 5.6 H4 L8 1.6 V14.4 L4 10.4 H1 Z" fill="none" stroke="#fff" stroke-width="1.1"/><path d="M10.4 5.4 C11.6 6.8 11.6 9.2 10.4 10.6 M12.6 3.4 C14.8 6 14.8 10 12.6 12.6 M14.8 1.6 C18 5.4 18 10.6 14.8 14.4" fill="none" stroke="#fff" stroke-width="1.1"/></svg>
<span class="t" style="left:1215.50px;top:744.00px;font-size:12px;color:#ffffff;transform:scaleX(0.7288);">ESP</span>
<span class="t" style="left:1249.00px;top:733.00px;font-size:12.5px;color:#ffffff;transform:scaleX(0.9067);">02:48 p. m.</span>
<span class="t" style="left:1249.00px;top:750.60px;font-size:12.5px;color:#ffffff;transform:scaleX(0.9191);">25/01/2023</span>
<svg class="r" style="left:1325px;top:740px;" width="17" height="16" viewBox="0 0 17 16"><path d="M1 1 H15.6 V11.4 H11 L8.4 14.4 V11.4 H1 Z" fill="none" stroke="#fff" stroke-width="1.2"/></svg>
</body></html>
